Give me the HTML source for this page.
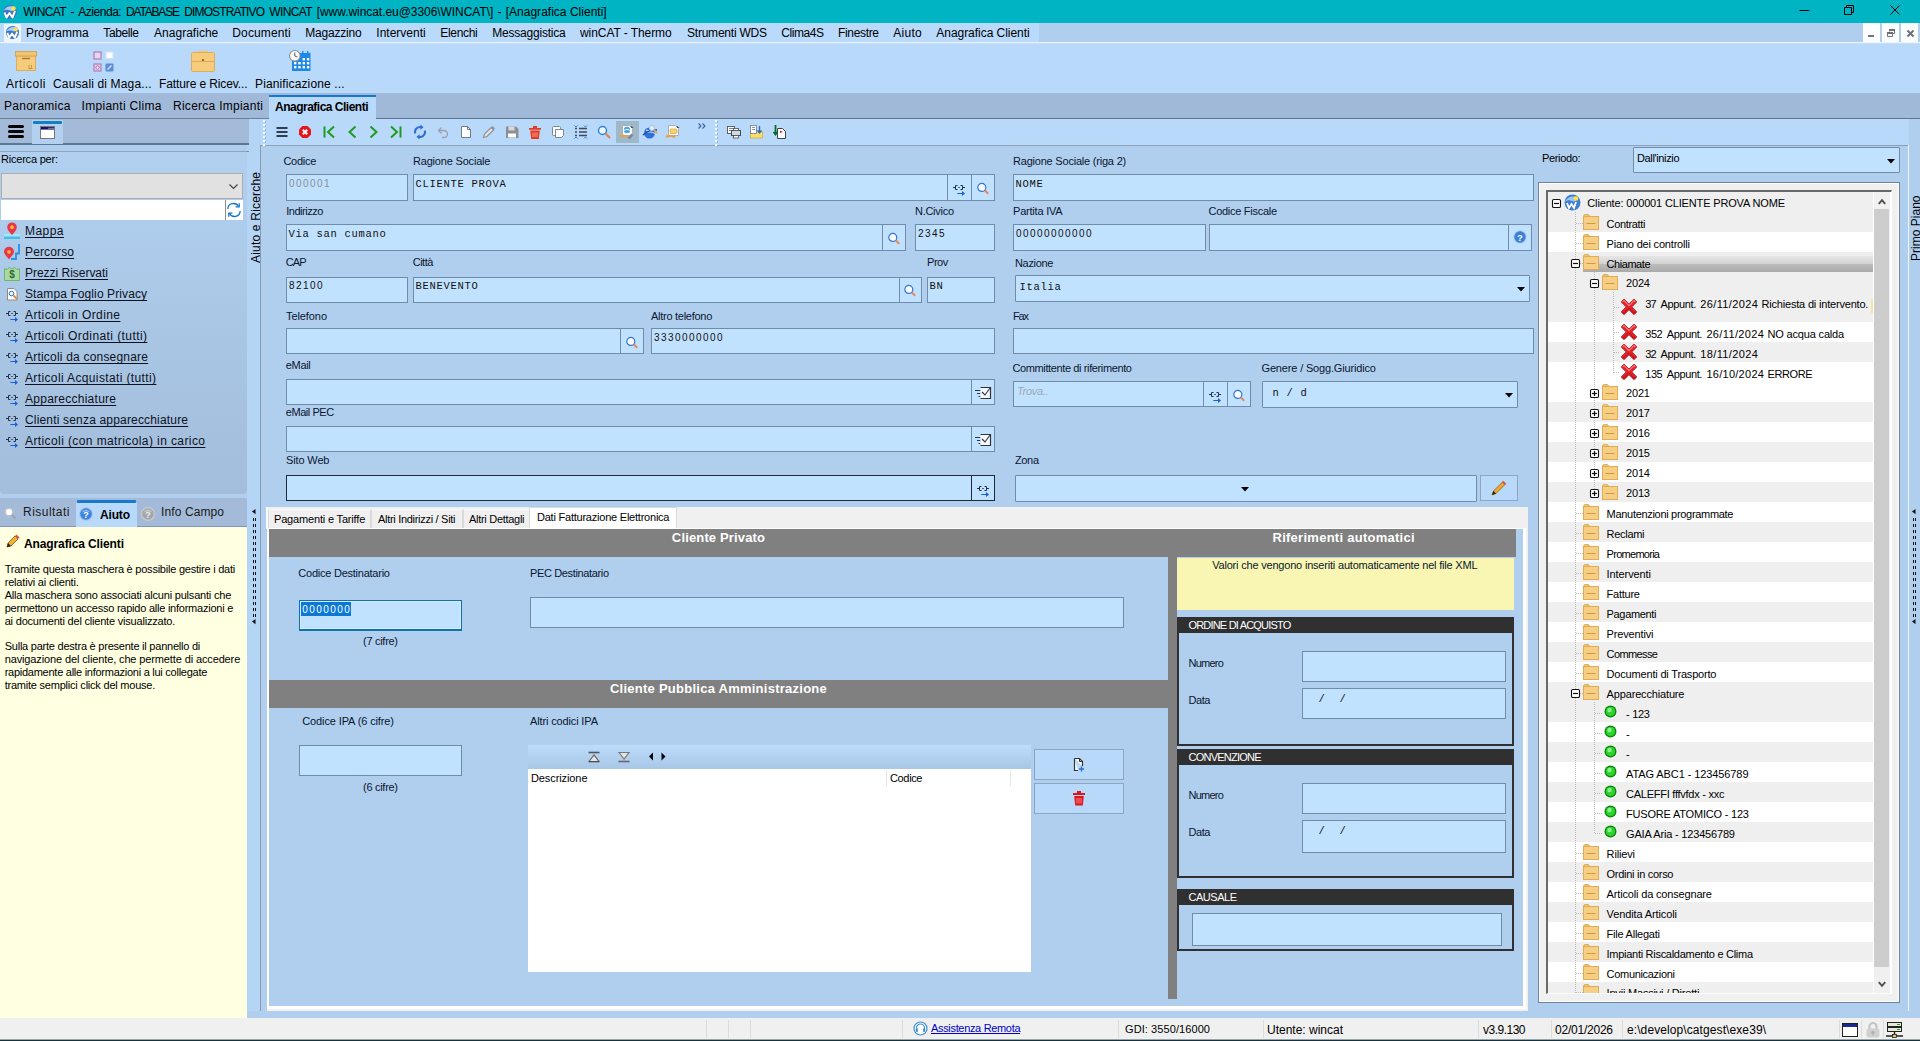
<!DOCTYPE html>
<html><head><meta charset="utf-8"><title>WINCAT</title>
<style>
html,body{margin:0;padding:0;}
body{width:1920px;height:1041px;overflow:hidden;position:relative;background:#b0cfee;font-family:"Liberation Sans",sans-serif;font-size:11px;color:#000;}
body div, body svg{position:absolute;box-sizing:border-box;}
svg{overflow:visible}
</style></head><body>
<div style="left:0px;top:0px;width:1920px;height:23px;background:#00b4c4;"></div>
<div style="left:0px;top:23px;width:1920px;height:20px;background:#b0cfee;"></div>
<div style="left:0px;top:23px;width:1039px;height:20px;background:#badafb;"></div>
<div style="left:0px;top:42px;width:1920px;height:1px;background:#eaf3fd;"></div>
<div style="left:0px;top:43px;width:1920px;height:1px;background:#c6dffb;"></div>
<div style="left:0px;top:44px;width:1920px;height:49px;background:#b9d9fb;"></div>
<div style="left:0px;top:93px;width:1920px;height:25px;background:#a0b9d9;"></div>
<div style="left:0px;top:118px;width:1920px;height:1px;background:#6f7f96;"></div>
<div style="left:249px;top:119px;width:1671px;height:27px;background:#b9d9fb;"></div>
<div style="left:264px;top:146px;width:1273px;height:361px;background:#b0cfee;"></div>
<div style="left:23.3px;top:3.84px;line-height:16px;font-size:12px;white-space:pre;letter-spacing:-0.607px;">WINCAT</div>
<div style="left:70.5px;top:3.84px;line-height:16px;font-size:12px;white-space:pre;letter-spacing:0.5px;">-</div>
<div style="left:78.3px;top:3.84px;line-height:16px;font-size:12px;white-space:pre;letter-spacing:-0.472px;">Azienda:</div>
<div style="left:126px;top:3.84px;line-height:16px;font-size:12px;white-space:pre;letter-spacing:-1.179px;">DATABASE</div>
<div style="left:184.3px;top:3.84px;line-height:16px;font-size:12px;white-space:pre;letter-spacing:-0.887px;">DIMOSTRATIVO</div>
<div style="left:269.3px;top:3.84px;line-height:16px;font-size:12px;white-space:pre;letter-spacing:-0.608px;">WINCAT</div>
<div style="left:316.7px;top:3.84px;line-height:16px;font-size:12px;white-space:pre;letter-spacing:-0.052px;">[www.wincat.eu@3306\WINCAT\]</div>
<div style="left:497.5px;top:3.84px;line-height:16px;font-size:12px;white-space:pre;letter-spacing:0.5px;">-</div>
<div style="left:505.7px;top:3.84px;line-height:16px;font-size:12px;white-space:pre;letter-spacing:0.015px;">[Anagrafica Clienti]</div>
<svg style="left:1799px;top:4px;" width="110" height="14" viewBox="0 0 110 14"><path d="M0.500 6.500h10" stroke="#000" stroke-width="1" fill="none"/><path d="M45.500 3.500h7v7h-7z M47.500 3.500v-2h7v7h-2" stroke="#000" stroke-width="1" fill="none"/><path d="M91.500 1.500l9 9m0-9l-9 9" stroke="#000" stroke-width="1" fill="none"/></svg>
<div style="left:26px;top:24.84px;line-height:16px;font-size:12px;white-space:pre;letter-spacing:0.002px;">Programma</div>
<div style="left:103.3px;top:24.84px;line-height:16px;font-size:12px;white-space:pre;letter-spacing:-0.389px;">Tabelle</div>
<div style="left:154px;top:24.84px;line-height:16px;font-size:12px;white-space:pre;letter-spacing:0.025px;">Anagrafiche</div>
<div style="left:232.3px;top:24.84px;line-height:16px;font-size:12px;white-space:pre;letter-spacing:0.13px;">Documenti</div>
<div style="left:305.3px;top:24.84px;line-height:16px;font-size:12px;white-space:pre;letter-spacing:-0.204px;">Magazzino</div>
<div style="left:376.3px;top:24.84px;line-height:16px;font-size:12px;white-space:pre;letter-spacing:0.005px;">Interventi</div>
<div style="left:440.3px;top:24.84px;line-height:16px;font-size:12px;white-space:pre;letter-spacing:-0.327px;">Elenchi</div>
<div style="left:492.3px;top:24.84px;line-height:16px;font-size:12px;white-space:pre;letter-spacing:-0.219px;">Messaggistica</div>
<div style="left:580px;top:24.84px;line-height:16px;font-size:12px;white-space:pre;letter-spacing:-0.072px;">winCAT - Thermo</div>
<div style="left:687px;top:24.84px;line-height:16px;font-size:12px;white-space:pre;letter-spacing:-0.224px;">Strumenti WDS</div>
<div style="left:781.3px;top:24.84px;line-height:16px;font-size:12px;white-space:pre;letter-spacing:-0.443px;">Clima4S</div>
<div style="left:838px;top:24.84px;line-height:16px;font-size:12px;white-space:pre;letter-spacing:-0.337px;">Finestre</div>
<div style="left:893.3px;top:24.84px;line-height:16px;font-size:12px;white-space:pre;letter-spacing:0.26px;">Aiuto</div>
<div style="left:936.3px;top:24.84px;line-height:16px;font-size:12px;white-space:pre;letter-spacing:-0.039px;">Anagrafica Clienti</div>
<div style="left:1863px;top:23px;width:17px;height:19px;background:#fcfdff;"></div>
<div style="left:1882px;top:23px;width:17px;height:19px;background:#fcfdff;"></div>
<div style="left:1901px;top:23px;width:17px;height:19px;background:#fcfdff;"></div>
<svg style="left:1863px;top:23px;" width="56" height="19" viewBox="0 0 56 19"><path d="M5 13h6" stroke="#6d717b" stroke-width="2" fill="none"/><path d="M24.500 10.500h5v3h-5z" stroke="#6d717b" stroke-width="1" fill="none"/><path d="M24 10h6" stroke="#6d717b" stroke-width="2"/><path d="M26.500 8.500v-1h5v3h-1.500" stroke="#6d717b" stroke-width="1" fill="none"/><path d="M26 7h6" stroke="#6d717b" stroke-width="2"/><path d="M44.500 7.500l6 6m0-6l-6 6" stroke="#6d717b" stroke-width="2" fill="none"/></svg>
<div style="left:6px;top:75.84px;line-height:16px;font-size:12px;white-space:pre;letter-spacing:0.498px;">Articoli</div>
<div style="left:53px;top:75.84px;line-height:16px;font-size:12px;white-space:pre;letter-spacing:0.144px;">Causali di Maga...</div>
<div style="left:159px;top:75.84px;line-height:16px;font-size:12px;white-space:pre;letter-spacing:-0.117px;">Fatture e Ricev...</div>
<div style="left:255px;top:75.84px;line-height:16px;font-size:12px;white-space:pre;letter-spacing:0.124px;">Pianificazione ...</div>
<div style="left:4px;top:97.84px;line-height:16px;font-size:12px;white-space:pre;letter-spacing:0.274px;">Panoramica</div>
<div style="left:81.5px;top:97.84px;line-height:16px;font-size:12px;white-space:pre;letter-spacing:0.305px;">Impianti Clima</div>
<div style="left:173px;top:97.84px;line-height:16px;font-size:12px;white-space:pre;letter-spacing:0.265px;">Ricerca Impianti</div>
<div style="left:269px;top:95px;width:107px;height:24px;background:#b9d9fb;border-top:2px solid #1979ca;"></div>
<div style="left:275px;top:98.84px;line-height:16px;font-size:12px;white-space:pre;letter-spacing:-0.502px;font-weight:700;">Anagrafica Clienti</div>
<div style="left:0px;top:1018px;width:1920px;height:21px;background:#f0f0f0;"></div>
<div style="left:0px;top:1039px;width:1920px;height:1px;background:#9aa5aa;"></div>
<div style="left:0px;top:1040px;width:1920px;height:1px;background:#17323f;"></div>
<div style="left:247px;top:119px;width:14px;height:899px;background:#b5d5f6;"></div>
<div style="left:0px;top:119px;width:249px;height:25px;background:#a3bbd9;"></div>
<div style="left:0px;top:143px;width:249px;height:2px;background:#5d7797;"></div>
<div style="left:32px;top:120px;width:31px;height:24px;background:#b3d0f0;"></div>
<div style="left:33px;top:121px;width:29px;height:3px;background:#1580c0;border-radius:1px;"></div>
<div style="left:0px;top:151px;width:249px;height:1px;background:#6f8aac;"></div>
<div style="left:0px;top:145px;width:247px;height:354px;background:#b0cfee;"></div>
<svg style="left:8px;top:125px;" width="16" height="14" viewBox="0 0 16 14"><path d="M1.500 1.500h13M1.500 6.500h13M1.500 11.500h13" stroke="#000" stroke-width="3" stroke-linecap="round" fill="none"/></svg>
<svg style="left:40px;top:126px;" width="15" height="13" viewBox="0 0 15 13"><rect x="0.500" y="0.500" width="14" height="12" fill="#fff" stroke="#777"/><rect x="1" y="1" width="13" height="2.600" fill="#14146e"/><path d="M8.500 2.300h1M10.500 2.300h1M12.500 2.300h1" stroke="#eee" stroke-width="1"/></svg>
<div style="left:0px;top:151px;width:247px;height:343px;background:linear-gradient(#b1d0ef,#a3bddc);border-radius:0 0 4px 4px;border-top:1px solid #8fa3bf;"></div>
<div style="left:1px;top:152.19px;line-height:14px;font-size:11px;white-space:pre;letter-spacing:-0.209px;">Ricerca per:</div>
<div style="left:1px;top:173px;width:242px;height:26px;background:#e1e1e1;border:1px solid #adadad;"></div>
<svg style="left:229px;top:184px;" width="9" height="6" viewBox="0 0 9 6"><path d="M0.5 0.5l4 4 4-4" stroke="#444" stroke-width="1.2" fill="none"/></svg>
<div style="left:1px;top:200px;width:224px;height:20px;background:#fff;"></div>
<div style="left:225px;top:200px;width:18px;height:20px;background:#fff;border-left:1px solid #8c8c8c;"></div>
<svg style="left:225.5px;top:202px;" width="16" height="16" viewBox="0 0 16 16"><path d="M1.800 7a5.700 5.700 0 0 1 10.700-2.500M14.200 9a5.700 5.700 0 0 1-10.700 2.500" stroke="#1373c4" stroke-width="1.300" fill="none"/><path d="M13.200 1.200v3.600H9.600M2.800 14.800v-3.600h3.600" stroke="#1373c4" stroke-width="1.300" fill="none"/></svg>
<div style="left:25px;top:222.84px;line-height:16px;font-size:12px;white-space:pre;letter-spacing:0.449px;color:#0c1222;text-decoration:underline;text-underline-offset:1.5px;text-decoration-skip-ink:none;">Mappa</div>
<div style="left:25px;top:243.84px;line-height:16px;font-size:12px;white-space:pre;letter-spacing:0.138px;color:#0c1222;text-decoration:underline;text-underline-offset:1.5px;text-decoration-skip-ink:none;">Percorso</div>
<div style="left:25px;top:264.84px;line-height:16px;font-size:12px;white-space:pre;letter-spacing:-0.024px;color:#0c1222;text-decoration:underline;text-underline-offset:1.5px;text-decoration-skip-ink:none;">Prezzi Riservati</div>
<div style="left:25px;top:285.84px;line-height:16px;font-size:12px;white-space:pre;letter-spacing:0.098px;color:#0c1222;text-decoration:underline;text-underline-offset:1.5px;text-decoration-skip-ink:none;">Stampa Foglio Privacy</div>
<div style="left:25px;top:306.84px;line-height:16px;font-size:12px;white-space:pre;letter-spacing:0.41px;color:#0c1222;text-decoration:underline;text-underline-offset:1.5px;text-decoration-skip-ink:none;">Articoli in Ordine</div>
<div style="left:25px;top:327.84px;line-height:16px;font-size:12px;white-space:pre;letter-spacing:0.415px;color:#0c1222;text-decoration:underline;text-underline-offset:1.5px;text-decoration-skip-ink:none;">Articoli Ordinati (tutti)</div>
<div style="left:25px;top:348.84px;line-height:16px;font-size:12px;white-space:pre;letter-spacing:0.203px;color:#0c1222;text-decoration:underline;text-underline-offset:1.5px;text-decoration-skip-ink:none;">Articoli da consegnare</div>
<div style="left:25px;top:369.84px;line-height:16px;font-size:12px;white-space:pre;letter-spacing:0.37px;color:#0c1222;text-decoration:underline;text-underline-offset:1.5px;text-decoration-skip-ink:none;">Articoli Acquistati (tutti)</div>
<div style="left:25px;top:390.84px;line-height:16px;font-size:12px;white-space:pre;letter-spacing:0.258px;color:#0c1222;text-decoration:underline;text-underline-offset:1.5px;text-decoration-skip-ink:none;">Apparecchiature</div>
<div style="left:25px;top:411.84px;line-height:16px;font-size:12px;white-space:pre;letter-spacing:0.175px;color:#0c1222;text-decoration:underline;text-underline-offset:1.5px;text-decoration-skip-ink:none;">Clienti senza apparecchiature</div>
<div style="left:25px;top:432.84px;line-height:16px;font-size:12px;white-space:pre;letter-spacing:0.402px;color:#0c1222;text-decoration:underline;text-underline-offset:1.5px;text-decoration-skip-ink:none;">Articoli (con matricola) in carico</div>
<svg style="left:4px;top:305px;" width="16" height="16" viewBox="0 0 16 16"><path d="M2 8.500h2.500M11.500 8.500H14M6.500 6.500h-2v4h2M9.500 6.500h2v4h-2M7.300 8.500h1.400" stroke="#1f3350" stroke-width="1" fill="none"/><path d="M6.300 14.500h5.500" stroke="#1a5fe0" stroke-width="1"/><path d="M11 12L14 14.500 11 17z" fill="#1a5fe0"/></svg>
<svg style="left:4px;top:326px;" width="16" height="16" viewBox="0 0 16 16"><path d="M2 8.500h2.500M11.500 8.500H14M6.500 6.500h-2v4h2M9.500 6.500h2v4h-2M7.300 8.500h1.400" stroke="#1f3350" stroke-width="1" fill="none"/><path d="M6.300 14.500h5.500" stroke="#1a5fe0" stroke-width="1"/><path d="M11 12L14 14.500 11 17z" fill="#1a5fe0"/></svg>
<svg style="left:4px;top:347px;" width="16" height="16" viewBox="0 0 16 16"><path d="M2 8.500h2.500M11.500 8.500H14M6.500 6.500h-2v4h2M9.500 6.500h2v4h-2M7.300 8.500h1.400" stroke="#1f3350" stroke-width="1" fill="none"/><path d="M6.300 14.500h5.500" stroke="#1a5fe0" stroke-width="1"/><path d="M11 12L14 14.500 11 17z" fill="#1a5fe0"/></svg>
<svg style="left:4px;top:368px;" width="16" height="16" viewBox="0 0 16 16"><path d="M2 8.500h2.500M11.500 8.500H14M6.500 6.500h-2v4h2M9.500 6.500h2v4h-2M7.300 8.500h1.400" stroke="#1f3350" stroke-width="1" fill="none"/><path d="M6.300 14.500h5.500" stroke="#1a5fe0" stroke-width="1"/><path d="M11 12L14 14.500 11 17z" fill="#1a5fe0"/></svg>
<svg style="left:4px;top:389px;" width="16" height="16" viewBox="0 0 16 16"><path d="M2 8.500h2.500M11.500 8.500H14M6.500 6.500h-2v4h2M9.500 6.500h2v4h-2M7.300 8.500h1.400" stroke="#1f3350" stroke-width="1" fill="none"/><path d="M6.300 14.500h5.500" stroke="#1a5fe0" stroke-width="1"/><path d="M11 12L14 14.500 11 17z" fill="#1a5fe0"/></svg>
<svg style="left:4px;top:410px;" width="16" height="16" viewBox="0 0 16 16"><path d="M2 8.500h2.500M11.500 8.500H14M6.500 6.500h-2v4h2M9.500 6.500h2v4h-2M7.300 8.500h1.400" stroke="#1f3350" stroke-width="1" fill="none"/><path d="M6.300 14.500h5.500" stroke="#1a5fe0" stroke-width="1"/><path d="M11 12L14 14.500 11 17z" fill="#1a5fe0"/></svg>
<svg style="left:4px;top:431px;" width="16" height="16" viewBox="0 0 16 16"><path d="M2 8.500h2.500M11.500 8.500H14M6.500 6.500h-2v4h2M9.500 6.500h2v4h-2M7.300 8.500h1.400" stroke="#1f3350" stroke-width="1" fill="none"/><path d="M6.300 14.500h5.500" stroke="#1a5fe0" stroke-width="1"/><path d="M11 12L14 14.500 11 17z" fill="#1a5fe0"/></svg>
<svg style="left:4px;top:222px;" width="16" height="17" viewBox="0 0 16 17"><path d="M0 12h16v3H0z" fill="#a5e4f5"/><path d="M0 14.500h16V17H0z" fill="#45bde8"/><path d="M8 13C5 9.500 3.200 7.500 3.200 5.200a4.800 4.800 0 0 1 9.600 0c0 2.300-1.800 4.300-4.800 7.800z" fill="#e8364a"/><circle cx="8" cy="5.200" r="1.900" fill="#ffb833"/></svg>
<svg style="left:4px;top:244px;" width="16" height="16" viewBox="0 0 16 16"><path d="M15 0v9.500h-3v5.500H7" stroke="#2d8fe5" stroke-width="1.800" fill="none"/><path d="M5 15.500C2.500 12 0 10 0 7.800a5 5 0 0 1 10 0c0 2.200-2.500 4.200-5 7.700z" fill="#e8364a"/><circle cx="5" cy="7.800" r="1.900" fill="#ffb833"/></svg>
<svg style="left:4px;top:266px;" width="16" height="15" viewBox="0 0 16 15"><path d="M0.500 2.500l2.500 1 2.500-2 2.500 1.500 2.500-1.500 2.500 2 2.500-1v12H0.500z" fill="#a9d8a3" stroke="#6fb56f" stroke-width="1"/><text x="8" y="12" font-size="10" font-weight="700" text-anchor="middle" fill="#2f6b32" font-family="Liberation Sans">$</text></svg>
<svg style="left:7px;top:288px;" width="11" height="13" viewBox="0 0 11 13"><path d="M0.500 0.500h6.500l3 3v8.500H0.500z" fill="#fff" stroke="#8a8a8a"/><circle cx="4.500" cy="5.500" r="2.300" fill="#e8f3ff" stroke="#3a6fb5" stroke-width="1"/><path d="M6.500 7.500l3.500 3.500" stroke="#e58a3c" stroke-width="1.800"/></svg>
<div style="left:249px;top:263px;line-height:15px;height:15px;font-size:12px;white-space:pre;letter-spacing:0.197px;color:#000;transform-origin:0 0;transform:rotate(-90deg);">Aiuto e Ricerche</div>
<div style="left:261px;top:146px;width:4px;height:872px;background:#b0cfee;"></div>
<div style="left:0px;top:498px;width:247px;height:29px;background:#a3bbd9;border-bottom:1px solid #8297b3;"></div>
<div style="left:76px;top:503px;width:61px;height:24px;background:#b9d9fb;"></div>
<div style="left:77px;top:500px;width:59px;height:3px;background:#1979ca;border-radius:1px;"></div>
<div style="left:23px;top:503.84px;line-height:16px;font-size:12px;white-space:pre;letter-spacing:0.477px;color:#1a1a1a;">Risultati</div>
<div style="left:100px;top:506.84px;line-height:16px;font-size:12px;white-space:pre;letter-spacing:-0.164px;font-weight:700;">Aiuto</div>
<div style="left:161px;top:503.84px;line-height:16px;font-size:12px;white-space:pre;letter-spacing:0.106px;color:#1a1a1a;">Info Campo</div>
<svg style="left:4px;top:507px;" width="13" height="13" viewBox="0 0 13 13"><circle cx="5" cy="5" r="3.800" fill="#fff" stroke="#b9c3cf" stroke-width="1.400"/><path d="M8 8l3.500 3.500" stroke="#9aa3ad" stroke-width="2"/></svg>
<svg style="left:79px;top:506.5px;" width="14" height="14" viewBox="0 0 14 14"><circle cx="7" cy="7" r="7" fill="#a9c9f0"/><circle cx="7" cy="7" r="5.800" fill="#3b83dc"/><path d="M2.500 5.500a5 5 0 0 1 9 0c-3-1.200-6-1.200-9 0z" fill="#8fbdf0"/><text x="7" y="10.500" font-size="9.500" font-weight="700" text-anchor="middle" fill="#fff" font-family="Liberation Sans">?</text></svg>
<svg style="left:141px;top:506.5px;" width="14" height="14" viewBox="0 0 14 14"><circle cx="7" cy="7" r="7" fill="#c9ccd1"/><circle cx="7" cy="7" r="5.800" fill="#a3a6ab"/><path d="M2.500 5.500a5 5 0 0 1 9 0c-3-1.200-6-1.200-9 0z" fill="#c6c8cc"/><text x="7" y="10.500" font-size="9.500" font-weight="700" text-anchor="middle" fill="#ececec" font-family="Liberation Sans">?</text></svg>
<div style="left:0px;top:527px;width:247px;height:491px;background:#ffffe1;"></div>
<div style="left:260px;top:145px;width:1px;height:873px;background:#8a9ab0;"></div>
<div style="left:24px;top:535.84px;line-height:16px;font-size:12px;white-space:pre;letter-spacing:-0.119px;font-weight:700;">Anagrafica Clienti</div>
<svg style="left:5px;top:534px;" width="15" height="15" viewBox="0 0 15 15"><path d="M2 13l1-4 7-7 3 3-7 7z" fill="#f2b233" stroke="#7a5a10" stroke-width="0.800"/><path d="M10 2l1.500-1.500 3 3L13 5z" fill="#e0524a"/><path d="M2 13l1-4 3 3z" fill="#222"/></svg>
<div style="left:4.7px;top:562.19px;line-height:14px;font-size:11px;white-space:pre;letter-spacing:-0.227px;">Tramite questa maschera è possibile gestire i dati</div>
<div style="left:4.7px;top:575.19px;line-height:14px;font-size:11px;white-space:pre;letter-spacing:-0.186px;">relativi ai clienti.</div>
<div style="left:4.7px;top:588.19px;line-height:14px;font-size:11px;white-space:pre;letter-spacing:-0.201px;">Alla maschera sono associati alcuni pulsanti che</div>
<div style="left:4.7px;top:601.19px;line-height:14px;font-size:11px;white-space:pre;letter-spacing:-0.236px;">permettono un accesso rapido alle informazioni e</div>
<div style="left:4.7px;top:614.19px;line-height:14px;font-size:11px;white-space:pre;letter-spacing:-0.198px;">ai documenti del cliente visualizzato.</div>
<div style="left:4.7px;top:639.19px;line-height:14px;font-size:11px;white-space:pre;letter-spacing:-0.23px;">Sulla parte destra è presente il pannello di</div>
<div style="left:4.7px;top:652.19px;line-height:14px;font-size:11px;white-space:pre;letter-spacing:-0.124px;">navigazione del cliente, che permette di accedere</div>
<div style="left:4.7px;top:665.19px;line-height:14px;font-size:11px;white-space:pre;letter-spacing:-0.259px;">rapidamente alle informazioni a lui collegate</div>
<div style="left:4.7px;top:678.19px;line-height:14px;font-size:11px;white-space:pre;letter-spacing:-0.222px;">tramite semplici click del mouse.</div>
<svg style="left:252px;top:509px;" width="4" height="6" viewBox="0 0 4 6"><path d="M3.500 0v5.200L0 2.600z" fill="#111"/></svg>
<div style="left:253px;top:518px;width:1px;height:3px;background:#111;"></div>
<div style="left:255px;top:518px;width:1px;height:3px;background:#111;"></div>
<div style="left:253px;top:524px;width:1px;height:3px;background:#111;"></div>
<div style="left:255px;top:524px;width:1px;height:3px;background:#111;"></div>
<div style="left:253px;top:530px;width:1px;height:3px;background:#111;"></div>
<div style="left:255px;top:530px;width:1px;height:3px;background:#111;"></div>
<div style="left:253px;top:536px;width:1px;height:3px;background:#111;"></div>
<div style="left:255px;top:536px;width:1px;height:3px;background:#111;"></div>
<div style="left:253px;top:542px;width:1px;height:3px;background:#111;"></div>
<div style="left:255px;top:542px;width:1px;height:3px;background:#111;"></div>
<div style="left:253px;top:548px;width:1px;height:3px;background:#111;"></div>
<div style="left:255px;top:548px;width:1px;height:3px;background:#111;"></div>
<div style="left:253px;top:554px;width:1px;height:3px;background:#111;"></div>
<div style="left:255px;top:554px;width:1px;height:3px;background:#111;"></div>
<div style="left:253px;top:560px;width:1px;height:3px;background:#111;"></div>
<div style="left:255px;top:560px;width:1px;height:3px;background:#111;"></div>
<div style="left:253px;top:566px;width:1px;height:3px;background:#111;"></div>
<div style="left:255px;top:566px;width:1px;height:3px;background:#111;"></div>
<div style="left:253px;top:572px;width:1px;height:3px;background:#111;"></div>
<div style="left:255px;top:572px;width:1px;height:3px;background:#111;"></div>
<div style="left:253px;top:578px;width:1px;height:3px;background:#111;"></div>
<div style="left:255px;top:578px;width:1px;height:3px;background:#111;"></div>
<div style="left:253px;top:584px;width:1px;height:3px;background:#111;"></div>
<div style="left:255px;top:584px;width:1px;height:3px;background:#111;"></div>
<div style="left:253px;top:590px;width:1px;height:3px;background:#111;"></div>
<div style="left:255px;top:590px;width:1px;height:3px;background:#111;"></div>
<div style="left:253px;top:596px;width:1px;height:3px;background:#111;"></div>
<div style="left:255px;top:596px;width:1px;height:3px;background:#111;"></div>
<div style="left:253px;top:602px;width:1px;height:3px;background:#111;"></div>
<div style="left:255px;top:602px;width:1px;height:3px;background:#111;"></div>
<div style="left:253px;top:608px;width:1px;height:3px;background:#111;"></div>
<div style="left:255px;top:608px;width:1px;height:3px;background:#111;"></div>
<div style="left:253px;top:614px;width:1px;height:3px;background:#111;"></div>
<div style="left:255px;top:614px;width:1px;height:3px;background:#111;"></div>
<svg style="left:252px;top:619px;" width="4" height="6" viewBox="0 0 4 6"><path d="M3.500 0v5.200L0 2.600z" fill="#111"/></svg>
<div style="left:261px;top:145px;width:1647px;height:1px;background:#8fa2bb;"></div>
<div style="left:376px;top:118px;width:1544px;height:1px;background:#5f7393;"></div>
<div style="left:263px;top:120px;width:2px;height:2px;background:#f4f9ff;"></div>
<div style="left:265px;top:121px;width:1px;height:2px;background:#9ab3d2;"></div>
<div style="left:715px;top:120px;width:2px;height:2px;background:#f4f9ff;"></div>
<div style="left:717px;top:121px;width:1px;height:2px;background:#9ab3d2;"></div>
<div style="left:263px;top:124px;width:2px;height:2px;background:#f4f9ff;"></div>
<div style="left:265px;top:125px;width:1px;height:2px;background:#9ab3d2;"></div>
<div style="left:715px;top:124px;width:2px;height:2px;background:#f4f9ff;"></div>
<div style="left:717px;top:125px;width:1px;height:2px;background:#9ab3d2;"></div>
<div style="left:263px;top:128px;width:2px;height:2px;background:#f4f9ff;"></div>
<div style="left:265px;top:129px;width:1px;height:2px;background:#9ab3d2;"></div>
<div style="left:715px;top:128px;width:2px;height:2px;background:#f4f9ff;"></div>
<div style="left:717px;top:129px;width:1px;height:2px;background:#9ab3d2;"></div>
<div style="left:263px;top:132px;width:2px;height:2px;background:#f4f9ff;"></div>
<div style="left:265px;top:133px;width:1px;height:2px;background:#9ab3d2;"></div>
<div style="left:715px;top:132px;width:2px;height:2px;background:#f4f9ff;"></div>
<div style="left:717px;top:133px;width:1px;height:2px;background:#9ab3d2;"></div>
<div style="left:263px;top:136px;width:2px;height:2px;background:#f4f9ff;"></div>
<div style="left:265px;top:137px;width:1px;height:2px;background:#9ab3d2;"></div>
<div style="left:715px;top:136px;width:2px;height:2px;background:#f4f9ff;"></div>
<div style="left:717px;top:137px;width:1px;height:2px;background:#9ab3d2;"></div>
<div style="left:263px;top:140px;width:2px;height:2px;background:#f4f9ff;"></div>
<div style="left:265px;top:141px;width:1px;height:2px;background:#9ab3d2;"></div>
<div style="left:715px;top:140px;width:2px;height:2px;background:#f4f9ff;"></div>
<div style="left:717px;top:141px;width:1px;height:2px;background:#9ab3d2;"></div>
<div style="left:263px;top:144px;width:2px;height:2px;background:#f4f9ff;"></div>
<div style="left:265px;top:145px;width:1px;height:2px;background:#9ab3d2;"></div>
<div style="left:715px;top:144px;width:2px;height:2px;background:#f4f9ff;"></div>
<div style="left:717px;top:145px;width:1px;height:2px;background:#9ab3d2;"></div>
<svg style="left:273.5px;top:124.0px;" width="16" height="16" viewBox="0 0 16 16"><path d="M2.500 4h11M2.500 8h11M2.500 12h11" stroke="#2d3e50" stroke-width="1.800" fill="none"/></svg>
<svg style="left:297.0px;top:124.0px;" width="16" height="16" viewBox="0 0 16 16"><path d="M5.400 2h5.200L14 5.400v5.200L10.600 14H5.400L2 10.600V5.400z" fill="#e8141c"/><path d="M5.800 5.800l4.400 4.400m0-4.400l-4.400 4.400" stroke="#fff" stroke-width="2.100"/></svg>
<svg style="left:321.0px;top:124.0px;" width="16" height="16" viewBox="0 0 16 16"><path d="M3.500 2.500v11" stroke="#1f9a1f" stroke-width="2"/><path d="M13 2.500L7 8l6 5.500" stroke="#1f9a1f" stroke-width="2" fill="none"/></svg>
<svg style="left:344.0px;top:124.0px;" width="16" height="16" viewBox="0 0 16 16"><path d="M11.500 2.500L5.500 8l6 5.500" stroke="#1f9a1f" stroke-width="2" fill="none"/></svg>
<svg style="left:365.5px;top:124.0px;" width="16" height="16" viewBox="0 0 16 16"><path d="M4.500 2.500L10.500 8l-6 5.500" stroke="#1f9a1f" stroke-width="2" fill="none"/></svg>
<svg style="left:388.0px;top:124.0px;" width="16" height="16" viewBox="0 0 16 16"><path d="M12.500 2.500v11" stroke="#1f9a1f" stroke-width="2"/><path d="M3 2.500L9 8l-6 5.500" stroke="#1f9a1f" stroke-width="2" fill="none"/></svg>
<svg style="left:412.0px;top:124.0px;" width="16" height="16" viewBox="0 0 16 16"><path d="M3.200 9.500A5 5 0 0 1 10 3.500M12.800 6.500A5 5 0 0 1 6 12.500" stroke="#2f6fd0" stroke-width="2" fill="none"/><path d="M8.500 0.500l3 2.800-3.200 2.400zM7.500 15.500l-3-2.800 3.200-2.400z" fill="#2f6fd0"/></svg>
<svg style="left:435.0px;top:124.0px;" width="16" height="16" viewBox="0 0 16 16"><path d="M3.500 6.500h5.500a3.500 3.500 0 0 1 0 7H7" stroke="#9aa3ad" stroke-width="1.300" fill="none"/><path d="M6.500 3.500l-3 3 3 3" stroke="#9aa3ad" stroke-width="1.300" fill="none"/></svg>
<svg style="left:458.0px;top:124.0px;" width="16" height="16" viewBox="0 0 16 16"><path d="M3.500 2.500h6l3 3v8h-9z" fill="#fff" stroke="#6f7b88" stroke-width="1"/><path d="M9.500 2.500v3h3" fill="none" stroke="#6f7b88"/></svg>
<svg style="left:481.0px;top:124.0px;" width="16" height="16" viewBox="0 0 16 16"><path d="M2.500 13.500l1-3.500 6.500-6.500 2.500 2.500-6.500 6.500z" fill="#e3e3e3" stroke="#8c9299" stroke-width="1.200"/><path d="M10 3.500l1.500-1.500 2.500 2.500-1.500 1.500z" fill="#8c9299"/></svg>
<svg style="left:504.0px;top:124.0px;" width="16" height="16" viewBox="0 0 16 16"><path d="M2 2.500h10l2.500 2.500v9H2z" fill="#8c8f94"/><rect x="4.500" y="2.500" width="6" height="4" fill="#d6d8db"/><rect x="4" y="9.500" width="8" height="4" fill="#fff"/></svg>
<svg style="left:527.0px;top:124.0px;" width="16" height="16" viewBox="0 0 16 16"><path d="M2 4h12v1.800H2zM6 2h4v2H6z" fill="#e63a1e"/><path d="M3.200 6.500h9.600l-1 8.500H4.200z" fill="#e63a1e"/><path d="M6 8.500v4.500M8 8.500v4.500M10 8.500v4.500" stroke="#ffc9bd" stroke-width=".7"/></svg>
<svg style="left:550.0px;top:124.0px;" width="16" height="16" viewBox="0 0 16 16"><rect x="2.500" y="2.500" width="8" height="9" rx="1" fill="#fff" stroke="#7d8794"/><path d="M5.500 5.500h8v6l-2 2h-6z" fill="#fff" stroke="#7d8794"/></svg>
<svg style="left:573.0px;top:124.0px;" width="16" height="16" viewBox="0 0 16 16"><path d="M6 4.500h8M6 8h8M6 11.500h8" stroke="#3c4a5c" stroke-width="1.300"/><path d="M2 4.500h2M2 8h2M2 11.500h2" stroke="#3c4a5c" stroke-width="1.300"/><path d="M1.500 1.500l1.500 1.500 1.500-1.500M11 1.500l1.500 1.500L14 1.500M1.500 14.500L3 13l1.500 1.500M11 14.500l1.500-1.500 1.500 1.500" stroke="#2f7fd6" stroke-width="1" fill="none"/></svg>
<svg style="left:596.0px;top:124.0px;" width="16" height="16" viewBox="0 0 16 16"><circle cx="6.500" cy="6.500" r="4" fill="#eaf5ff" stroke="#2f86d6" stroke-width="1.500"/><path d="M9.500 9.500l4.500 4.500" stroke="#e0884a" stroke-width="2.200"/></svg>
<div style="left:616px;top:121px;width:23px;height:22px;background:#9fb8c8;"></div>
<svg style="left:619.0px;top:124.0px;" width="16" height="16" viewBox="0 0 16 16"><path d="M3.500 1.500h7l3 3v7h-10z" fill="#fff" stroke="#a8b0ba"/><circle cx="8" cy="6" r="3.200" fill="#4aa3e6"/><path d="M5 6.500c2-1.500 4-1.500 6 0" stroke="#fff" stroke-width="1" fill="none"/><path d="M1 12.500c3-1.500 5-1.500 7 .5" stroke="#e8a04a" stroke-width="2.200" fill="none"/><path d="M9.500 14.500l4-4" stroke="#7d8794" stroke-width="2.500"/><path d="M11.500 2l3 1.500-2 .5z" fill="#222"/></svg>
<svg style="left:642.0px;top:124.0px;" width="16" height="16" viewBox="0 0 16 16"><circle cx="7.500" cy="9" r="5.500" fill="#2f6fd6"/><path d="M2 9.500c3-2 8-2 11 0M4 6c2 1 5 1 7 0" stroke="#bfe0ff" stroke-width="1.200" fill="none"/><path d="M1 11c3-3 9-6 14-5" stroke="#1b3f9a" stroke-width="1.300" fill="none"/><circle cx="10" cy="4" r="2.600" fill="#dff0ff" stroke="#a9c4de"/><path d="M12 6l3 3" stroke="#e0a06a" stroke-width="1.800"/></svg>
<svg style="left:665.0px;top:124.0px;" width="16" height="16" viewBox="0 0 16 16"><path d="M3.500 1.500h7l3 3v7h-10z" fill="#fff" stroke="#a8b0ba"/><rect x="5" y="5" width="7" height="4.500" rx="1" fill="#f5d27a" stroke="#d9a93a" stroke-width=".8"/><path d="M1 13c3-1.500 6-1.500 9 .5" stroke="#e8a04a" stroke-width="2.200" fill="none"/><path d="M11.500 2l3 1.500-2 .5z" fill="#222"/></svg>
<svg style="left:698px;top:123px;" width="9" height="6" viewBox="0 0 9 6"><path d="M0.500 0.500L3 3 0.500 5.500M4.500 0.500L7 3 4.500 5.500" stroke="#3f5f9f" stroke-width="1.100" fill="none"/></svg>
<svg style="left:725.5px;top:124.0px;" width="16" height="16" viewBox="0 0 16 16"><rect x="1.500" y="2.500" width="7" height="7" fill="#fff" stroke="#59636f"/><path d="M3 4.500h4M3 6.500h4" stroke="#59636f" stroke-width=".8"/><rect x="5.500" y="6.500" width="9" height="5" fill="#d5d9de" stroke="#474f59"/><rect x="7.500" y="4.500" width="5" height="2" fill="#fff" stroke="#474f59" stroke-width=".8"/><rect x="7.500" y="11.500" width="5" height="2.500" fill="#fff" stroke="#474f59" stroke-width=".8"/></svg>
<svg style="left:748.5px;top:124.0px;" width="16" height="16" viewBox="0 0 16 16"><rect x="1.500" y="7.500" width="12" height="6.500" fill="#f7dc6f" stroke="#d4b23a" stroke-width=".8"/><rect x="1.500" y="1.500" width="6" height="8" fill="#fff" stroke="#6c7a89" stroke-width=".8"/><path d="M3 3.500h3M3 5.500h3" stroke="#6c7a89" stroke-width=".8"/><path d="M10.500 2v6.500M8.500 6.500l2 2.500 2-2.500" stroke="#2f6fb0" stroke-width="1.400" fill="none"/></svg>
<svg style="left:772.0px;top:124.0px;" width="16" height="16" viewBox="0 0 16 16"><path d="M5.500 4.500h5l3 3v7h-8z" fill="#fff" stroke="#3c4450"/><path d="M3.500 1v9M1.500 8l2 2.500 2-2.500" stroke="#0a6e2a" stroke-width="1.800" fill="none"/><path d="M8 6.500l3 1.500-3 1z" fill="#e02020"/></svg>
<div style="left:283.4px;top:154.19px;line-height:14px;font-size:11px;white-space:pre;letter-spacing:-0.27px;color:#0a1630;">Codice</div>
<div style="left:413px;top:154.19px;line-height:14px;font-size:11px;white-space:pre;letter-spacing:-0.188px;color:#0a1630;">Ragione Sociale</div>
<div style="left:286px;top:174px;width:122px;height:27px;background:#c1e2ff;border:1px solid #718bab;"></div>
<div style="left:289.09999999999997px;top:176.63px;line-height:13px;font-size:10px;white-space:pre;letter-spacing:1.44px;color:#8a8f96;">000001</div>
<div style="left:413px;top:174px;width:535px;height:27px;background:#c1e2ff;border:1px solid #718bab;"></div>
<div style="left:415.4px;top:176.80px;line-height:14px;font-size:10.5px;white-space:pre;font-family:'Liberation Mono',monospace;letter-spacing:0.7px;color:#111;">CLIENTE PROVA</div>
<div style="left:947px;top:174px;width:25px;height:27px;background:#c1e2ff;border:1px solid #718bab;"></div>
<svg style="left:951px;top:179px;" width="16" height="16" viewBox="0 0 16 16"><path d="M2 8.500h2.500M11.500 8.500H14M6.500 6.500h-2v4h2M9.500 6.500h2v4h-2M7.300 8.500h1.400" stroke="#1f3350" stroke-width="1" fill="none"/><path d="M6.300 14.500h5.500" stroke="#1a5fe0" stroke-width="1"/><path d="M11 12L14 14.500 11 17z" fill="#1a5fe0"/></svg>
<div style="left:971px;top:174px;width:24px;height:27px;background:#c1e2ff;border:1px solid #718bab;"></div>
<svg style="left:975px;top:179px;" width="16" height="16" viewBox="0 0 16 16"><circle cx="6.800" cy="8.400" r="4" fill="#fafdff" stroke="#3573d6" stroke-width="1.200"/><path d="M9.900 11.500l3.300 3.300" stroke="#e8875a" stroke-width="2"/></svg>
<div style="left:1013px;top:154.19px;line-height:14px;font-size:11px;white-space:pre;letter-spacing:-0.209px;color:#0a1630;">Ragione Sociale (riga 2)</div>
<div style="left:1013px;top:174px;width:521px;height:27px;background:#c1e2ff;border:1px solid #718bab;"></div>
<div style="left:1015.4px;top:176.80px;line-height:14px;font-size:10.5px;white-space:pre;font-family:'Liberation Mono',monospace;letter-spacing:0.7px;color:#111;">NOME</div>
<div style="left:286.2px;top:203.69px;line-height:14px;font-size:11px;white-space:pre;letter-spacing:-0.484px;color:#0a1630;">Indirizzo</div>
<div style="left:915px;top:203.69px;line-height:14px;font-size:11px;white-space:pre;letter-spacing:-0.279px;color:#0a1630;">N.Civico</div>
<div style="left:286px;top:224px;width:597px;height:27px;background:#c1e2ff;border:1px solid #718bab;"></div>
<div style="left:288.4px;top:226.80px;line-height:14px;font-size:10.5px;white-space:pre;font-family:'Liberation Mono',monospace;letter-spacing:0.7px;color:#111;">Via san cumano</div>
<div style="left:882px;top:224px;width:24px;height:27px;background:#c1e2ff;border:1px solid #718bab;"></div>
<svg style="left:886px;top:229px;" width="16" height="16" viewBox="0 0 16 16"><circle cx="6.800" cy="8.400" r="4" fill="#fafdff" stroke="#3573d6" stroke-width="1.200"/><path d="M9.900 11.500l3.300 3.300" stroke="#e8875a" stroke-width="2"/></svg>
<div style="left:915px;top:224px;width:80px;height:27px;background:#c1e2ff;border:1px solid #718bab;"></div>
<div style="left:918.1px;top:226.63px;line-height:13px;font-size:10px;white-space:pre;letter-spacing:1.44px;color:#111;">2345</div>
<div style="left:1013px;top:203.69px;line-height:14px;font-size:11px;white-space:pre;letter-spacing:-0.207px;color:#0a1630;">Partita IVA</div>
<div style="left:1208.5px;top:203.69px;line-height:14px;font-size:11px;white-space:pre;letter-spacing:-0.28px;color:#0a1630;">Codice Fiscale</div>
<div style="left:1013px;top:224px;width:193px;height:27px;background:#c1e2ff;border:1px solid #718bab;"></div>
<div style="left:1016.1px;top:226.63px;line-height:13px;font-size:10px;white-space:pre;letter-spacing:1.44px;color:#111;">00000000000</div>
<div style="left:1209px;top:224px;width:300px;height:27px;background:#c1e2ff;border:1px solid #718bab;"></div>
<div style="left:1508px;top:224px;width:24px;height:27px;background:#c1e2ff;border:1px solid #718bab;"></div>
<svg style="left:1512px;top:229px;" width="16" height="16" viewBox="0 0 16 16"><circle cx="8" cy="8" r="6.500" fill="#4a8ee0" stroke="#c5d9f2" stroke-width="1.200"/><circle cx="8" cy="8" r="5" fill="#3b7fd6"/><text x="8" y="11.500" font-size="9.500" font-weight="700" text-anchor="middle" fill="#fff" font-family="Liberation Sans">?</text></svg>
<div style="left:285.8px;top:255.39px;line-height:14px;font-size:11px;white-space:pre;letter-spacing:-0.963px;color:#0a1630;">CAP</div>
<div style="left:412.7px;top:255.39px;line-height:14px;font-size:11px;white-space:pre;letter-spacing:-0.481px;color:#0a1630;">Città</div>
<div style="left:927px;top:255.39px;line-height:14px;font-size:11px;white-space:pre;letter-spacing:-0.442px;color:#0a1630;">Prov</div>
<div style="left:286px;top:276.5px;width:122px;height:26px;background:#c1e2ff;border:1px solid #718bab;"></div>
<div style="left:289.09999999999997px;top:279.14px;line-height:13px;font-size:10px;white-space:pre;letter-spacing:1.44px;color:#111;">82100</div>
<div style="left:413px;top:276.5px;width:487px;height:26px;background:#c1e2ff;border:1px solid #718bab;"></div>
<div style="left:415.4px;top:279.30px;line-height:14px;font-size:10.5px;white-space:pre;font-family:'Liberation Mono',monospace;letter-spacing:0.7px;color:#111;">BENEVENTO</div>
<div style="left:899px;top:276.5px;width:23px;height:26px;background:#c1e2ff;border:1px solid #718bab;"></div>
<svg style="left:902px;top:281px;" width="16" height="16" viewBox="0 0 16 16"><circle cx="6.800" cy="8.400" r="4" fill="#fafdff" stroke="#3573d6" stroke-width="1.200"/><path d="M9.900 11.500l3.300 3.300" stroke="#e8875a" stroke-width="2"/></svg>
<div style="left:927px;top:276.5px;width:68px;height:26px;background:#c1e2ff;border:1px solid #718bab;"></div>
<div style="left:929.4px;top:279.30px;line-height:14px;font-size:10.5px;white-space:pre;font-family:'Liberation Mono',monospace;letter-spacing:0.7px;color:#111;">BN</div>
<div style="left:1015px;top:255.99px;line-height:14px;font-size:11px;white-space:pre;letter-spacing:-0.327px;color:#0a1630;">Nazione</div>
<div style="left:1015px;top:275px;width:515px;height:27px;background:#c1e2ff;border:1px solid #718bab;border-radius:1px;"></div>
<div style="left:1019.5px;top:280.00px;line-height:14px;font-size:10.5px;white-space:pre;font-family:'Liberation Mono',monospace;letter-spacing:0.7px;color:#111;">Italia</div>
<svg style="left:1517px;top:287px;" width="9" height="5" viewBox="0 0 9 5"><path d="M0 0h8L4 4.500z" fill="#000"/></svg>
<div style="left:286px;top:308.69px;line-height:14px;font-size:11px;white-space:pre;letter-spacing:-0.085px;color:#0a1630;">Telefono</div>
<div style="left:651px;top:308.69px;line-height:14px;font-size:11px;white-space:pre;letter-spacing:-0.271px;color:#0a1630;">Altro telefono</div>
<div style="left:1013px;top:308.69px;line-height:14px;font-size:11px;white-space:pre;letter-spacing:-1.172px;color:#0a1630;">Fax</div>
<div style="left:286px;top:328px;width:335px;height:26px;background:#c1e2ff;border:1px solid #718bab;"></div>
<div style="left:620px;top:328px;width:24px;height:26px;background:#c1e2ff;border:1px solid #718bab;"></div>
<svg style="left:624px;top:333px;" width="16" height="16" viewBox="0 0 16 16"><circle cx="6.800" cy="8.400" r="4" fill="#fafdff" stroke="#3573d6" stroke-width="1.200"/><path d="M9.900 11.500l3.300 3.300" stroke="#e8875a" stroke-width="2"/></svg>
<div style="left:651px;top:328px;width:344px;height:26px;background:#c1e2ff;border:1px solid #718bab;"></div>
<div style="left:654.1px;top:330.64px;line-height:13px;font-size:10px;white-space:pre;letter-spacing:1.44px;color:#111;">3330000000</div>
<div style="left:1013px;top:328px;width:521px;height:26px;background:#c1e2ff;border:1px solid #718bab;"></div>
<div style="left:285.8px;top:358.39px;line-height:14px;font-size:11px;white-space:pre;letter-spacing:-0.324px;color:#0a1630;">eMail</div>
<div style="left:286px;top:379px;width:686px;height:26px;background:#c1e2ff;border:1px solid #718bab;"></div>
<div style="left:971px;top:379px;width:24px;height:26px;background:#c1e2ff;border:1px solid #718bab;"></div>
<svg style="left:975px;top:383px;" width="16" height="16" viewBox="0 0 16 16"><path d="M0 7.500h5.500M2 10.500h3.500M3.500 13.500h2" stroke="#2b3a4d" stroke-width="1"/><path d="M5.500 4.500h10v11h-10" fill="#f4faff" stroke="#333" stroke-width="1.200"/><path d="M7 9l3 3 5-7" stroke="#333" stroke-width="1.100" fill="none"/></svg>
<div style="left:1012.5px;top:361.49px;line-height:14px;font-size:11px;white-space:pre;letter-spacing:-0.38px;color:#0a1630;">Committente di riferimento</div>
<div style="left:1261.5px;top:361.49px;line-height:14px;font-size:11px;white-space:pre;letter-spacing:-0.16px;color:#0a1630;">Genere / Sogg.Giuridico</div>
<div style="left:1013px;top:381px;width:191px;height:26px;background:#c1e2ff;border:1px solid #718bab;"></div>
<div style="left:1017px;top:384.19px;line-height:14px;font-size:11px;white-space:pre;letter-spacing:-0.32px;color:#9aa9bb;font-style:italic;">Trova..</div>
<div style="left:1203px;top:381px;width:25px;height:26px;background:#c1e2ff;border:1px solid #718bab;"></div>
<svg style="left:1207px;top:386px;" width="16" height="16" viewBox="0 0 16 16"><path d="M2 8.500h2.500M11.500 8.500H14M6.500 6.500h-2v4h2M9.500 6.500h2v4h-2M7.300 8.500h1.400" stroke="#1f3350" stroke-width="1" fill="none"/><path d="M6.300 14.500h5.500" stroke="#1a5fe0" stroke-width="1"/><path d="M11 12L14 14.500 11 17z" fill="#1a5fe0"/></svg>
<div style="left:1227px;top:381px;width:24px;height:26px;background:#c1e2ff;border:1px solid #718bab;"></div>
<svg style="left:1231px;top:386px;" width="16" height="16" viewBox="0 0 16 16"><circle cx="6.800" cy="8.400" r="4" fill="#fafdff" stroke="#3573d6" stroke-width="1.200"/><path d="M9.900 11.500l3.300 3.300" stroke="#e8875a" stroke-width="2"/></svg>
<div style="left:1262px;top:381px;width:256px;height:27px;background:#c1e2ff;border:1px solid #718bab;border-radius:1px;"></div>
<div style="left:1272.6px;top:386.40px;line-height:14px;font-size:10.5px;white-space:pre;font-family:'Liberation Mono',monospace;letter-spacing:0.7px;color:#111;">n / d</div>
<svg style="left:1505px;top:393px;" width="9" height="5" viewBox="0 0 9 5"><path d="M0 0h8L4 4.500z" fill="#000"/></svg>
<div style="left:285.8px;top:404.69px;line-height:14px;font-size:11px;white-space:pre;letter-spacing:-0.446px;color:#0a1630;">eMail PEC</div>
<div style="left:286px;top:426px;width:686px;height:26px;background:#c1e2ff;border:1px solid #718bab;"></div>
<div style="left:971px;top:426px;width:24px;height:26px;background:#c1e2ff;border:1px solid #718bab;"></div>
<svg style="left:975px;top:430px;" width="16" height="16" viewBox="0 0 16 16"><path d="M0 7.500h5.500M2 10.500h3.500M3.500 13.500h2" stroke="#2b3a4d" stroke-width="1"/><path d="M5.500 4.500h10v11h-10" fill="#f4faff" stroke="#333" stroke-width="1.200"/><path d="M7 9l3 3 5-7" stroke="#333" stroke-width="1.100" fill="none"/></svg>
<div style="left:286px;top:453.39px;line-height:14px;font-size:11px;white-space:pre;letter-spacing:-0.134px;color:#0a1630;">Sito Web</div>
<div style="left:286px;top:475px;width:686px;height:26px;background:#c1e2ff;border:1px solid #1e2a3a;"></div>
<div style="left:971px;top:475px;width:24px;height:26px;background:#c1e2ff;border:1px solid #1e2a3a;"></div>
<svg style="left:975px;top:480px;" width="16" height="16" viewBox="0 0 16 16"><path d="M2 8.500h2.500M11.500 8.500H14M6.500 6.500h-2v4h2M9.500 6.500h2v4h-2M7.300 8.500h1.400" stroke="#1f3350" stroke-width="1" fill="none"/><path d="M6.300 14.500h5.500" stroke="#1a5fe0" stroke-width="1"/><path d="M11 12L14 14.500 11 17z" fill="#1a5fe0"/></svg>
<div style="left:1015px;top:453.49px;line-height:14px;font-size:11px;white-space:pre;letter-spacing:-0.359px;color:#0a1630;">Zona</div>
<div style="left:1015px;top:475px;width:462px;height:27px;background:#c1e2ff;border:1px solid #718bab;border-radius:1px;"></div>
<svg style="left:1241px;top:487px;" width="9" height="5" viewBox="0 0 9 5"><path d="M0 0h8L4 4.500z" fill="#000"/></svg>
<div style="left:1480px;top:475px;width:38px;height:26px;background:#b9d9fb;border:1px solid #8ea6c4;"></div>
<svg style="left:1490px;top:479px;" width="18" height="18" viewBox="0 0 18 18"><path d="M2 16l1.500-4L13 2.500l2.500 2.500L6 14.500z" fill="#f0a830" stroke="#8a5a10" stroke-width=".8"/><path d="M12 3.500l1.500-1.500 2.500 2.500-1.500 1.500z" fill="#e0524a"/><path d="M2 16l1.500-4 2.500 2.500z" fill="#222"/></svg>
<div style="left:266px;top:507px;width:1262px;height:22px;background:#f0f0f0;"></div>
<div style="left:266px;top:507px;width:2px;height:22px;background:#fafafa;"></div>
<div style="left:268px;top:509px;width:103px;height:19px;background:#f0f0f0;border:1px solid #dadada;border-top-color:#f9f9f9;border-bottom:none;"></div>
<div style="left:274px;top:512.19px;line-height:14px;font-size:11px;white-space:pre;letter-spacing:-0.172px;">Pagamenti e Tariffe</div>
<div style="left:371px;top:509px;width:92px;height:19px;background:#f0f0f0;border:1px solid #dadada;border-top-color:#f9f9f9;border-bottom:none;"></div>
<div style="left:378px;top:512.19px;line-height:14px;font-size:11px;white-space:pre;letter-spacing:-0.298px;">Altri Indirizzi / Siti</div>
<div style="left:463px;top:509px;width:67px;height:19px;background:#f0f0f0;border:1px solid #dadada;border-top-color:#f9f9f9;border-bottom:none;"></div>
<div style="left:469px;top:512.19px;line-height:14px;font-size:11px;white-space:pre;letter-spacing:-0.292px;">Altri Dettagli</div>
<div style="left:529px;top:507px;width:148px;height:22px;background:#fff;border:1px solid #d9d9d9;border-bottom:none;"></div>
<div style="left:537px;top:509.89px;line-height:14px;font-size:11px;white-space:pre;letter-spacing:-0.225px;">Dati Fatturazione Elettronica</div>
<div style="left:267px;top:528px;width:1261px;height:483px;background:#f1f1f1;"></div>
<div style="left:267px;top:528px;width:1259px;height:481px;background:#fff;"></div>
<div style="left:269px;top:529px;width:1254px;height:477px;background:#b0cfee;"></div>
<div style="left:269px;top:529px;width:1247px;height:28px;background:#808080;"></div>
<div style="left:269px;top:680px;width:899px;height:28px;background:#808080;"></div>
<div style="left:1168px;top:557px;width:9px;height:442px;background:#808080;"></div>
<div style="left:269px;top:529.30px;line-height:17px;font-size:13px;white-space:pre;letter-spacing:0.15px;color:#fff;font-weight:700;width:899px;text-align:center;">Cliente Privato</div>
<div style="left:1272.5px;top:529.30px;line-height:17px;font-size:13px;white-space:pre;letter-spacing:0.265px;color:#fff;font-weight:700;">Riferimenti automatici</div>
<div style="left:269px;top:680.30px;line-height:17px;font-size:13px;white-space:pre;letter-spacing:0.25px;color:#fff;font-weight:700;width:899px;text-align:center;">Cliente Pubblica Amministrazione</div>
<div style="left:298.3px;top:566.19px;line-height:14px;font-size:11px;white-space:pre;letter-spacing:-0.239px;color:#0a1630;">Codice Destinatario</div>
<div style="left:530px;top:566.19px;line-height:14px;font-size:11px;white-space:pre;letter-spacing:-0.358px;color:#0a1630;">PEC Destinatario</div>
<div style="left:299px;top:600px;width:163px;height:31px;background:#c1e2ff;border:1px solid #1272a8;border-bottom-width:2px;box-shadow:inset 0 0 0 1px #d4ebff;"></div>
<div style="left:301px;top:602px;width:50px;height:14px;background:#0a78d7;"></div>
<div style="left:302.2px;top:603.03px;line-height:13px;font-size:10px;white-space:pre;letter-spacing:1.44px;color:#fff;">0000000</div>
<div style="left:363px;top:633.69px;line-height:14px;font-size:11px;white-space:pre;letter-spacing:-0.285px;color:#0a1630;">(7 cifre)</div>
<div style="left:530px;top:597px;width:594px;height:31px;background:#c1e2ff;border:1px solid #718bab;"></div>
<div style="left:302.3px;top:714.19px;line-height:14px;font-size:11px;white-space:pre;letter-spacing:-0.119px;color:#0a1630;">Codice IPA (6 cifre)</div>
<div style="left:530px;top:714.19px;line-height:14px;font-size:11px;white-space:pre;letter-spacing:-0.14px;color:#0a1630;">Altri codici IPA</div>
<div style="left:299px;top:745px;width:163px;height:31px;background:#c1e2ff;border:1px solid #718bab;"></div>
<div style="left:363px;top:779.69px;line-height:14px;font-size:11px;white-space:pre;letter-spacing:-0.285px;color:#0a1630;">(6 cifre)</div>
<div style="left:528px;top:745px;width:503px;height:24px;background:linear-gradient(#bcdcfc,#a8c6e6);"></div>
<div style="left:528px;top:769px;width:503px;height:203px;background:#fff;"></div>
<div style="left:886px;top:770px;width:1px;height:16px;background:#e5e5e5;"></div>
<div style="left:1010px;top:770px;width:1px;height:16px;background:#e5e5e5;"></div>
<div style="left:531px;top:771.19px;line-height:14px;font-size:11px;white-space:pre;letter-spacing:-0.097px;">Descrizione</div>
<div style="left:890px;top:771.19px;line-height:14px;font-size:11px;white-space:pre;letter-spacing:-0.35px;">Codice</div>
<svg style="left:587px;top:751px;" width="14" height="12" viewBox="0 0 14 12"><path d="M1.500 1.500h11" stroke="#555" stroke-width="1.600"/><path d="M2 10.500l5-6.500 5 6.500z" fill="#e6e6e6" stroke="#666" stroke-width="1.200"/><path d="M2 10.800h10" stroke="#444" stroke-width="1"/></svg>
<svg style="left:617px;top:751px;" width="14" height="12" viewBox="0 0 14 12"><path d="M1.500 10.500h11" stroke="#666" stroke-width="1.600"/><path d="M2 1.500l5 6.500 5-6.500z" fill="#e6e6e6" stroke="#777" stroke-width="1.200"/></svg>
<svg style="left:648px;top:752px;" width="20" height="9" viewBox="0 0 20 9"><path d="M5 0.500v8L1 4.500zM13.500 0.500v8l4-4z" fill="#000"/></svg>
<div style="left:1034px;top:749px;width:90px;height:31px;background:#b9d9fb;border:1px solid #8ea6c4;"></div>
<div style="left:1034px;top:783px;width:90px;height:31px;background:#b9d9fb;border:1px solid #8ea6c4;"></div>
<svg style="left:1072px;top:757px;" width="14" height="16" viewBox="0 0 14 16"><path d="M2.500 1.500h5l3 3v4.500M6 13.500H2.500v-12" fill="#fff" stroke="#333" stroke-width="1.200"/><path d="M7.500 1.500v3h3" fill="none" stroke="#333" stroke-width="1"/><path d="M9.500 9.500v5M7 12h5" stroke="#2f6fd0" stroke-width="1.400"/></svg>
<svg style="left:1072px;top:790px;" width="14" height="16" viewBox="0 0 14 16"><path d="M1 3h12v2H1zM5 1h4v2H5z" fill="#e0141c"/><path d="M2.200 6h9.600l-1 9.500H3.200z" fill="#e0141c"/><path d="M5 8v5.500M7 8v5.500M9 8v5.500" stroke="#ffd0d0" stroke-width=".6"/></svg>
<div style="left:1177px;top:558px;width:337px;height:52px;background:#f8f6b2;"></div>
<div style="left:1212.2px;top:558.19px;line-height:14px;font-size:11px;white-space:pre;letter-spacing:-0.196px;color:#0a1630;">Valori che vengono inseriti automaticamente nel file XML</div>
<div style="left:1177px;top:617px;width:337px;height:129px;border:2px solid #303030;"></div>
<div style="left:1177px;top:617px;width:337px;height:16px;background:#303030;"></div>
<div style="left:1188.5px;top:618.19px;line-height:14px;font-size:11px;white-space:pre;letter-spacing:-0.815px;color:#fff;">ORDINE DI ACQUISTO</div>
<div style="left:1177px;top:749px;width:337px;height:129px;border:2px solid #303030;"></div>
<div style="left:1177px;top:749px;width:337px;height:16px;background:#303030;"></div>
<div style="left:1188.5px;top:750.19px;line-height:14px;font-size:11px;white-space:pre;letter-spacing:-0.769px;color:#fff;">CONVENZIONE</div>
<div style="left:1177px;top:889px;width:337px;height:62px;border:2px solid #303030;"></div>
<div style="left:1177px;top:889px;width:337px;height:16px;background:#303030;"></div>
<div style="left:1188.5px;top:890.19px;line-height:14px;font-size:11px;white-space:pre;letter-spacing:-0.477px;color:#fff;">CAUSALE</div>
<div style="left:1188.5px;top:656.39px;line-height:14px;font-size:11px;white-space:pre;letter-spacing:-0.765px;color:#0a1630;">Numero</div>
<div style="left:1302px;top:651px;width:204px;height:31px;background:#c1e2ff;border:1px solid #718bab;"></div>
<div style="left:1188.5px;top:788.39px;line-height:14px;font-size:11px;white-space:pre;letter-spacing:-0.765px;color:#0a1630;">Numero</div>
<div style="left:1302px;top:783px;width:204px;height:31px;background:#c1e2ff;border:1px solid #718bab;"></div>
<div style="left:1188.5px;top:692.99px;line-height:14px;font-size:11px;white-space:pre;letter-spacing:-0.417px;color:#0a1630;">Data</div>
<div style="left:1302px;top:688px;width:204px;height:31px;background:#c1e2ff;border:1px solid #718bab;"></div>
<div style="left:1318.5px;top:691.70px;line-height:14px;font-size:10.5px;white-space:pre;font-family:'Liberation Mono',monospace;letter-spacing:0.7px;color:#111;">/</div>
<div style="left:1339.5px;top:691.70px;line-height:14px;font-size:10.5px;white-space:pre;font-family:'Liberation Mono',monospace;letter-spacing:0.7px;color:#111;">/</div>
<div style="left:1188.5px;top:824.99px;line-height:14px;font-size:11px;white-space:pre;letter-spacing:-0.417px;color:#0a1630;">Data</div>
<div style="left:1302px;top:820px;width:204px;height:33px;background:#c1e2ff;border:1px solid #718bab;"></div>
<div style="left:1318.5px;top:823.70px;line-height:14px;font-size:10.5px;white-space:pre;font-family:'Liberation Mono',monospace;letter-spacing:0.7px;color:#111;">/</div>
<div style="left:1339.5px;top:823.70px;line-height:14px;font-size:10.5px;white-space:pre;font-family:'Liberation Mono',monospace;letter-spacing:0.7px;color:#111;">/</div>
<div style="left:1192px;top:913px;width:310px;height:33px;background:#c1e2ff;border:1px solid #718bab;"></div>
<div style="left:1537px;top:146px;width:383px;height:861px;background:#b0cfee;"></div>
<div style="left:1542px;top:151.19px;line-height:14px;font-size:11px;white-space:pre;letter-spacing:-0.355px;">Periodo:</div>
<div style="left:1633px;top:147px;width:267px;height:26px;background:#c1e2ff;border:1px solid #718bab;border-radius:1px;"></div>
<div style="left:1637px;top:151.19px;line-height:14px;font-size:11px;white-space:pre;letter-spacing:-0.362px;">Dall&#x27;inizio</div>
<svg style="left:1887px;top:159px;" width="9" height="5" viewBox="0 0 9 5"><path d="M0 0h8L4 4.500z" fill="#000"/></svg>
<div style="left:1538px;top:182px;width:362px;height:821px;background:#f0f0f0;border:1px solid #6f83a0;box-shadow:inset 0 0 0 1px #fff;"></div>
<div style="left:1546px;top:190px;width:346px;height:804px;background:#fff;border:1px solid #fdfdfd;border-top:2px solid #696969;border-left:2px solid #696969;"></div>
<div style="left:1548px;top:192px;width:325px;height:40px;background:#efefef;"></div>
<div style="left:1548px;top:252px;width:325px;height:70px;background:#efefef;"></div>
<div style="left:1548px;top:342px;width:325px;height:20px;background:#efefef;"></div>
<div style="left:1548px;top:402px;width:325px;height:20px;background:#efefef;"></div>
<div style="left:1548px;top:442px;width:325px;height:20px;background:#efefef;"></div>
<div style="left:1548px;top:482px;width:325px;height:20px;background:#efefef;"></div>
<div style="left:1548px;top:522px;width:325px;height:20px;background:#efefef;"></div>
<div style="left:1548px;top:562px;width:325px;height:20px;background:#efefef;"></div>
<div style="left:1548px;top:602px;width:325px;height:20px;background:#efefef;"></div>
<div style="left:1548px;top:642px;width:325px;height:20px;background:#efefef;"></div>
<div style="left:1548px;top:682px;width:325px;height:40px;background:#efefef;"></div>
<div style="left:1548px;top:742px;width:325px;height:20px;background:#efefef;"></div>
<div style="left:1548px;top:782px;width:325px;height:20px;background:#efefef;"></div>
<div style="left:1548px;top:822px;width:325px;height:20px;background:#efefef;"></div>
<div style="left:1548px;top:862px;width:325px;height:20px;background:#efefef;"></div>
<div style="left:1548px;top:902px;width:325px;height:20px;background:#efefef;"></div>
<div style="left:1548px;top:942px;width:325px;height:20px;background:#efefef;"></div>
<div style="left:1548px;top:982px;width:325px;height:11px;background:#efefef;"></div>
<div style="left:1874px;top:192px;width:16px;height:801px;background:#f0f0f0;"></div>
<div style="left:1874px;top:209px;width:15px;height:758px;background:#cdcdcd;"></div>
<svg style="left:1877.5px;top:197.5px;" width="9" height="7" viewBox="0 0 9 7"><path d="M0.800 5.800L4 2.200l3.200 3.600" stroke="#505050" stroke-width="2" fill="none"/></svg>
<svg style="left:1877.5px;top:980.5px;" width="9" height="7" viewBox="0 0 9 7"><path d="M0.800 1.200L4 4.800l3.200-3.600" stroke="#505050" stroke-width="2" fill="none"/></svg>
<div style="left:1583px;top:256px;width:290px;height:16px;background:linear-gradient(#e6e6e6 0%,#d2d2d2 48%,#bcbcbc 52%,#aaaaaa 100%);"></div>
<div style="left:1575px;top:212px;width:1px;height:781px;background:repeating-linear-gradient(180deg,#bababa 0 1px,transparent 1px 2px);"></div>
<div style="left:1594px;top:272px;width:1px;height:222px;background:repeating-linear-gradient(180deg,#bababa 0 1px,transparent 1px 2px);"></div>
<div style="left:1613px;top:292px;width:1px;height:82px;background:repeating-linear-gradient(180deg,#bababa 0 1px,transparent 1px 2px);"></div>
<div style="left:1594px;top:702px;width:1px;height:132px;background:repeating-linear-gradient(180deg,#bababa 0 1px,transparent 1px 2px);"></div>
<div style="left:1587.3px;top:196.19px;line-height:14px;font-size:11px;white-space:pre;letter-spacing:-0.154px;">Cliente: 000001 CLIENTE PROVA NOME</div>
<svg style="left:1552px;top:198.5px;" width="9" height="9" viewBox="0 0 9 9"><rect x="0.500" y="0.500" width="8" height="8" rx="1.300" fill="#fff" stroke="#111" stroke-width="1.100"/><path d="M2 4.500h5" stroke="#111" stroke-width="1.200"/></svg>
<svg style="left:1564px;top:194px;" width="17" height="17" viewBox="0 0 17 17"><circle cx="8.500" cy="8.500" r="8" fill="#3f7fd0"/><path d="M1 8c2-5 8-7 13-4-1 3-4 4-6 3s-5-1-7 1z" fill="#9cc7f2"/><circle cx="12" cy="4.500" r="2.300" fill="#ffe24a"/><path d="M3 9l2 5 2.500-4 2.500 4 2-6" stroke="#fff" stroke-width="1.800" fill="none"/></svg>
<svg style="left:1583px;top:214px;" width="16" height="16" viewBox="0 0 16 16"><path d="M0.500 3.500v-2l1-1h4l1.500 2z" fill="#e8c27a" stroke="#d9a94f" stroke-width=".8"/><rect x="0.500" y="2.500" width="15" height="13" fill="#f6cf85" stroke="#e0ad55" stroke-width="1"/><path d="M3.500 9.500h9" stroke="#cf9a48" stroke-width="1"/></svg>
<div style="left:1606.6px;top:216.69px;line-height:14px;font-size:11px;white-space:pre;letter-spacing:-0.335px;">Contratti</div>
<div style="left:1576px;top:223px;width:7px;height:1px;background:repeating-linear-gradient(90deg,#bababa 0 1px,transparent 1px 2px);"></div>
<svg style="left:1583px;top:234px;" width="16" height="16" viewBox="0 0 16 16"><path d="M0.500 3.500v-2l1-1h4l1.500 2z" fill="#e8c27a" stroke="#d9a94f" stroke-width=".8"/><rect x="0.500" y="2.500" width="15" height="13" fill="#f6cf85" stroke="#e0ad55" stroke-width="1"/><path d="M3.500 9.500h9" stroke="#cf9a48" stroke-width="1"/></svg>
<div style="left:1606.6px;top:236.69px;line-height:14px;font-size:11px;white-space:pre;letter-spacing:-0.191px;">Piano dei controlli</div>
<div style="left:1576px;top:243px;width:7px;height:1px;background:repeating-linear-gradient(90deg,#bababa 0 1px,transparent 1px 2px);"></div>
<svg style="left:1583px;top:254px;" width="16" height="16" viewBox="0 0 16 16"><path d="M0.500 3.500v-2l1-1h4l1.500 2z" fill="#e8c27a" stroke="#d9a94f" stroke-width=".8"/><rect x="0.500" y="2.500" width="15" height="13" fill="#f6cf85" stroke="#e0ad55" stroke-width="1"/><path d="M3.500 9.500h9" stroke="#cf9a48" stroke-width="1"/></svg>
<div style="left:1606.6px;top:256.69px;line-height:14px;font-size:11px;white-space:pre;letter-spacing:-0.454px;">Chiamate</div>
<div style="left:1576px;top:263px;width:7px;height:1px;background:repeating-linear-gradient(90deg,#bababa 0 1px,transparent 1px 2px);"></div>
<svg style="left:1571px;top:258.5px;" width="9" height="9" viewBox="0 0 9 9"><rect x="0.500" y="0.500" width="8" height="8" rx="1.300" fill="#fff" stroke="#111" stroke-width="1.100"/><path d="M2 4.500h5" stroke="#111" stroke-width="1.200"/></svg>
<svg style="left:1590px;top:278.5px;" width="9" height="9" viewBox="0 0 9 9"><rect x="0.500" y="0.500" width="8" height="8" rx="1.300" fill="#fff" stroke="#111" stroke-width="1.100"/><path d="M2 4.500h5" stroke="#111" stroke-width="1.200"/></svg>
<svg style="left:1602px;top:274px;" width="16" height="16" viewBox="0 0 16 16"><path d="M0.500 3.500v-2l1-1h4l1.500 2z" fill="#e8c27a" stroke="#d9a94f" stroke-width=".8"/><rect x="0.500" y="2.500" width="15" height="13" fill="#f6cf85" stroke="#e0ad55" stroke-width="1"/><path d="M3.500 9.500h9" stroke="#cf9a48" stroke-width="1"/></svg>
<div style="left:1626px;top:276.19px;line-height:14px;font-size:11px;white-space:pre;letter-spacing:-0.161px;">2024</div>
<svg style="left:1619.1px;top:298.1px;" width="20" height="17.8" viewBox="0 0 18 16"><path d="M2 3.500L4.500 1 9 5.500 13.500 1 16 3.500 11.500 8 16 12.500 13.500 15 9 10.500 4.500 15 2 12.500 6.500 8z" fill="#e3232b" stroke="#b3121a" stroke-width=".8" stroke-linejoin="round"/><path d="M3.300 3.500l1.200-1.200L9 6.800l4.500-4.500 1.200 1.200" stroke="#f77" stroke-width="1.100" fill="none"/><path d="M3.300 12.500l1.200 1.200L9 9.200l4.500 4.500 1.200-1.200" stroke="#c4141c" stroke-width="1" fill="none"/></svg>
<div style="left:1614px;top:307px;width:6px;height:1px;background:repeating-linear-gradient(90deg,#bababa 0 1px,transparent 1px 2px);"></div>
<div style="left:1645.3px;top:296.69px;line-height:14px;font-size:11px;white-space:pre;letter-spacing:-0.95px;">37</div>
<div style="left:1660.4px;top:296.69px;line-height:14px;font-size:11px;white-space:pre;letter-spacing:-0.337px;">Appunt.</div>
<div style="left:1700.3px;top:296.69px;line-height:14px;font-size:11px;white-space:pre;letter-spacing:0.361px;">26/11/2024</div>
<div style="left:1761.5px;top:296.69px;line-height:14px;font-size:11px;white-space:pre;letter-spacing:-0.19px;">Richiesta di intervento.</div>
<svg style="left:1619.1px;top:323.1px;" width="20" height="17.8" viewBox="0 0 18 16"><path d="M2 3.500L4.500 1 9 5.500 13.500 1 16 3.500 11.500 8 16 12.500 13.500 15 9 10.500 4.500 15 2 12.500 6.500 8z" fill="#e3232b" stroke="#b3121a" stroke-width=".8" stroke-linejoin="round"/><path d="M3.300 3.500l1.200-1.200L9 6.800l4.500-4.500 1.200 1.200" stroke="#f77" stroke-width="1.100" fill="none"/><path d="M3.300 12.500l1.200 1.200L9 9.200l4.500 4.500 1.200-1.200" stroke="#c4141c" stroke-width="1" fill="none"/></svg>
<div style="left:1614px;top:332px;width:6px;height:1px;background:repeating-linear-gradient(90deg,#bababa 0 1px,transparent 1px 2px);"></div>
<div style="left:1645.3px;top:326.69px;line-height:14px;font-size:11px;white-space:pre;letter-spacing:-0.53px;">352</div>
<div style="left:1666.7px;top:326.69px;line-height:14px;font-size:11px;white-space:pre;letter-spacing:-0.37px;">Appunt.</div>
<div style="left:1706.4px;top:326.69px;line-height:14px;font-size:11px;white-space:pre;letter-spacing:0.361px;">26/11/2024</div>
<div style="left:1767.5px;top:326.69px;line-height:14px;font-size:11px;white-space:pre;letter-spacing:-0.169px;">NO acqua calda</div>
<svg style="left:1619.1px;top:343.1px;" width="20" height="17.8" viewBox="0 0 18 16"><path d="M2 3.500L4.500 1 9 5.500 13.500 1 16 3.500 11.500 8 16 12.500 13.500 15 9 10.500 4.500 15 2 12.500 6.500 8z" fill="#e3232b" stroke="#b3121a" stroke-width=".8" stroke-linejoin="round"/><path d="M3.300 3.500l1.200-1.200L9 6.800l4.500-4.500 1.200 1.200" stroke="#f77" stroke-width="1.100" fill="none"/><path d="M3.300 12.500l1.200 1.200L9 9.200l4.500 4.500 1.200-1.200" stroke="#c4141c" stroke-width="1" fill="none"/></svg>
<div style="left:1614px;top:352px;width:6px;height:1px;background:repeating-linear-gradient(90deg,#bababa 0 1px,transparent 1px 2px);"></div>
<div style="left:1645.3px;top:346.69px;line-height:14px;font-size:11px;white-space:pre;letter-spacing:-0.95px;">32</div>
<div style="left:1660.4px;top:346.69px;line-height:14px;font-size:11px;white-space:pre;letter-spacing:-0.337px;">Appunt.</div>
<div style="left:1700.3px;top:346.69px;line-height:14px;font-size:11px;white-space:pre;letter-spacing:0.361px;">18/11/2024</div>
<svg style="left:1619.1px;top:363.1px;" width="20" height="17.8" viewBox="0 0 18 16"><path d="M2 3.500L4.500 1 9 5.500 13.500 1 16 3.500 11.500 8 16 12.500 13.500 15 9 10.500 4.500 15 2 12.500 6.500 8z" fill="#e3232b" stroke="#b3121a" stroke-width=".8" stroke-linejoin="round"/><path d="M3.300 3.500l1.200-1.200L9 6.800l4.500-4.500 1.200 1.200" stroke="#f77" stroke-width="1.100" fill="none"/><path d="M3.300 12.500l1.200 1.200L9 9.200l4.500 4.500 1.200-1.200" stroke="#c4141c" stroke-width="1" fill="none"/></svg>
<div style="left:1614px;top:372px;width:6px;height:1px;background:repeating-linear-gradient(90deg,#bababa 0 1px,transparent 1px 2px);"></div>
<div style="left:1645.3px;top:366.69px;line-height:14px;font-size:11px;white-space:pre;letter-spacing:-0.53px;">135</div>
<div style="left:1666.7px;top:366.69px;line-height:14px;font-size:11px;white-space:pre;letter-spacing:-0.37px;">Appunt.</div>
<div style="left:1706.4px;top:366.69px;line-height:14px;font-size:11px;white-space:pre;letter-spacing:0.271px;">16/10/2024</div>
<div style="left:1767.5px;top:366.69px;line-height:14px;font-size:11px;white-space:pre;letter-spacing:-0.372px;">ERRORE</div>
<div style="left:1871px;top:299px;width:2px;height:14px;background:#f3e7a0;"></div>
<svg style="left:1590px;top:388.5px;" width="9" height="9" viewBox="0 0 9 9"><rect x="0.500" y="0.500" width="8" height="8" rx="1.300" fill="#fff" stroke="#111" stroke-width="1.100"/><path d="M2 4.500h5" stroke="#111" stroke-width="1.200"/><path d="M4.500 2v5" stroke="#111" stroke-width="1.200"/></svg>
<svg style="left:1602px;top:384px;" width="16" height="16" viewBox="0 0 16 16"><path d="M0.500 3.500v-2l1-1h4l1.500 2z" fill="#e8c27a" stroke="#d9a94f" stroke-width=".8"/><rect x="0.500" y="2.500" width="15" height="13" fill="#f6cf85" stroke="#e0ad55" stroke-width="1"/><path d="M3.500 9.500h9" stroke="#cf9a48" stroke-width="1"/></svg>
<div style="left:1626px;top:386.19px;line-height:14px;font-size:11px;white-space:pre;letter-spacing:-0.161px;">2021</div>
<svg style="left:1590px;top:408.5px;" width="9" height="9" viewBox="0 0 9 9"><rect x="0.500" y="0.500" width="8" height="8" rx="1.300" fill="#fff" stroke="#111" stroke-width="1.100"/><path d="M2 4.500h5" stroke="#111" stroke-width="1.200"/><path d="M4.500 2v5" stroke="#111" stroke-width="1.200"/></svg>
<svg style="left:1602px;top:404px;" width="16" height="16" viewBox="0 0 16 16"><path d="M0.500 3.500v-2l1-1h4l1.500 2z" fill="#e8c27a" stroke="#d9a94f" stroke-width=".8"/><rect x="0.500" y="2.500" width="15" height="13" fill="#f6cf85" stroke="#e0ad55" stroke-width="1"/><path d="M3.500 9.500h9" stroke="#cf9a48" stroke-width="1"/></svg>
<div style="left:1626px;top:406.19px;line-height:14px;font-size:11px;white-space:pre;letter-spacing:-0.161px;">2017</div>
<svg style="left:1590px;top:428.5px;" width="9" height="9" viewBox="0 0 9 9"><rect x="0.500" y="0.500" width="8" height="8" rx="1.300" fill="#fff" stroke="#111" stroke-width="1.100"/><path d="M2 4.500h5" stroke="#111" stroke-width="1.200"/><path d="M4.500 2v5" stroke="#111" stroke-width="1.200"/></svg>
<svg style="left:1602px;top:424px;" width="16" height="16" viewBox="0 0 16 16"><path d="M0.500 3.500v-2l1-1h4l1.500 2z" fill="#e8c27a" stroke="#d9a94f" stroke-width=".8"/><rect x="0.500" y="2.500" width="15" height="13" fill="#f6cf85" stroke="#e0ad55" stroke-width="1"/><path d="M3.500 9.500h9" stroke="#cf9a48" stroke-width="1"/></svg>
<div style="left:1626px;top:426.19px;line-height:14px;font-size:11px;white-space:pre;letter-spacing:-0.161px;">2016</div>
<svg style="left:1590px;top:448.5px;" width="9" height="9" viewBox="0 0 9 9"><rect x="0.500" y="0.500" width="8" height="8" rx="1.300" fill="#fff" stroke="#111" stroke-width="1.100"/><path d="M2 4.500h5" stroke="#111" stroke-width="1.200"/><path d="M4.500 2v5" stroke="#111" stroke-width="1.200"/></svg>
<svg style="left:1602px;top:444px;" width="16" height="16" viewBox="0 0 16 16"><path d="M0.500 3.500v-2l1-1h4l1.500 2z" fill="#e8c27a" stroke="#d9a94f" stroke-width=".8"/><rect x="0.500" y="2.500" width="15" height="13" fill="#f6cf85" stroke="#e0ad55" stroke-width="1"/><path d="M3.500 9.500h9" stroke="#cf9a48" stroke-width="1"/></svg>
<div style="left:1626px;top:446.19px;line-height:14px;font-size:11px;white-space:pre;letter-spacing:-0.161px;">2015</div>
<svg style="left:1590px;top:468.5px;" width="9" height="9" viewBox="0 0 9 9"><rect x="0.500" y="0.500" width="8" height="8" rx="1.300" fill="#fff" stroke="#111" stroke-width="1.100"/><path d="M2 4.500h5" stroke="#111" stroke-width="1.200"/><path d="M4.500 2v5" stroke="#111" stroke-width="1.200"/></svg>
<svg style="left:1602px;top:464px;" width="16" height="16" viewBox="0 0 16 16"><path d="M0.500 3.500v-2l1-1h4l1.500 2z" fill="#e8c27a" stroke="#d9a94f" stroke-width=".8"/><rect x="0.500" y="2.500" width="15" height="13" fill="#f6cf85" stroke="#e0ad55" stroke-width="1"/><path d="M3.500 9.500h9" stroke="#cf9a48" stroke-width="1"/></svg>
<div style="left:1626px;top:466.19px;line-height:14px;font-size:11px;white-space:pre;letter-spacing:-0.161px;">2014</div>
<svg style="left:1590px;top:488.5px;" width="9" height="9" viewBox="0 0 9 9"><rect x="0.500" y="0.500" width="8" height="8" rx="1.300" fill="#fff" stroke="#111" stroke-width="1.100"/><path d="M2 4.500h5" stroke="#111" stroke-width="1.200"/><path d="M4.500 2v5" stroke="#111" stroke-width="1.200"/></svg>
<svg style="left:1602px;top:484px;" width="16" height="16" viewBox="0 0 16 16"><path d="M0.500 3.500v-2l1-1h4l1.500 2z" fill="#e8c27a" stroke="#d9a94f" stroke-width=".8"/><rect x="0.500" y="2.500" width="15" height="13" fill="#f6cf85" stroke="#e0ad55" stroke-width="1"/><path d="M3.500 9.500h9" stroke="#cf9a48" stroke-width="1"/></svg>
<div style="left:1626px;top:486.19px;line-height:14px;font-size:11px;white-space:pre;letter-spacing:-0.161px;">2013</div>
<svg style="left:1583px;top:504px;" width="16" height="16" viewBox="0 0 16 16"><path d="M0.500 3.500v-2l1-1h4l1.500 2z" fill="#e8c27a" stroke="#d9a94f" stroke-width=".8"/><rect x="0.500" y="2.500" width="15" height="13" fill="#f6cf85" stroke="#e0ad55" stroke-width="1"/><path d="M3.500 9.500h9" stroke="#cf9a48" stroke-width="1"/></svg>
<div style="left:1606.6px;top:506.69px;line-height:14px;font-size:11px;white-space:pre;letter-spacing:-0.305px;">Manutenzioni programmate</div>
<div style="left:1576px;top:513px;width:7px;height:1px;background:repeating-linear-gradient(90deg,#bababa 0 1px,transparent 1px 2px);"></div>
<svg style="left:1583px;top:524px;" width="16" height="16" viewBox="0 0 16 16"><path d="M0.500 3.500v-2l1-1h4l1.500 2z" fill="#e8c27a" stroke="#d9a94f" stroke-width=".8"/><rect x="0.500" y="2.500" width="15" height="13" fill="#f6cf85" stroke="#e0ad55" stroke-width="1"/><path d="M3.500 9.500h9" stroke="#cf9a48" stroke-width="1"/></svg>
<div style="left:1606.6px;top:526.69px;line-height:14px;font-size:11px;white-space:pre;letter-spacing:-0.306px;">Reclami</div>
<div style="left:1576px;top:533px;width:7px;height:1px;background:repeating-linear-gradient(90deg,#bababa 0 1px,transparent 1px 2px);"></div>
<svg style="left:1583px;top:544px;" width="16" height="16" viewBox="0 0 16 16"><path d="M0.500 3.500v-2l1-1h4l1.500 2z" fill="#e8c27a" stroke="#d9a94f" stroke-width=".8"/><rect x="0.500" y="2.500" width="15" height="13" fill="#f6cf85" stroke="#e0ad55" stroke-width="1"/><path d="M3.500 9.500h9" stroke="#cf9a48" stroke-width="1"/></svg>
<div style="left:1606.6px;top:546.69px;line-height:14px;font-size:11px;white-space:pre;letter-spacing:-0.723px;">Promemoria</div>
<div style="left:1576px;top:553px;width:7px;height:1px;background:repeating-linear-gradient(90deg,#bababa 0 1px,transparent 1px 2px);"></div>
<svg style="left:1583px;top:564px;" width="16" height="16" viewBox="0 0 16 16"><path d="M0.500 3.500v-2l1-1h4l1.500 2z" fill="#e8c27a" stroke="#d9a94f" stroke-width=".8"/><rect x="0.500" y="2.500" width="15" height="13" fill="#f6cf85" stroke="#e0ad55" stroke-width="1"/><path d="M3.500 9.500h9" stroke="#cf9a48" stroke-width="1"/></svg>
<div style="left:1606.6px;top:566.69px;line-height:14px;font-size:11px;white-space:pre;letter-spacing:-0.094px;">Interventi</div>
<div style="left:1576px;top:573px;width:7px;height:1px;background:repeating-linear-gradient(90deg,#bababa 0 1px,transparent 1px 2px);"></div>
<svg style="left:1583px;top:584px;" width="16" height="16" viewBox="0 0 16 16"><path d="M0.500 3.500v-2l1-1h4l1.500 2z" fill="#e8c27a" stroke="#d9a94f" stroke-width=".8"/><rect x="0.500" y="2.500" width="15" height="13" fill="#f6cf85" stroke="#e0ad55" stroke-width="1"/><path d="M3.500 9.500h9" stroke="#cf9a48" stroke-width="1"/></svg>
<div style="left:1606.6px;top:586.69px;line-height:14px;font-size:11px;white-space:pre;letter-spacing:-0.243px;">Fatture</div>
<div style="left:1576px;top:593px;width:7px;height:1px;background:repeating-linear-gradient(90deg,#bababa 0 1px,transparent 1px 2px);"></div>
<svg style="left:1583px;top:604px;" width="16" height="16" viewBox="0 0 16 16"><path d="M0.500 3.500v-2l1-1h4l1.500 2z" fill="#e8c27a" stroke="#d9a94f" stroke-width=".8"/><rect x="0.500" y="2.500" width="15" height="13" fill="#f6cf85" stroke="#e0ad55" stroke-width="1"/><path d="M3.500 9.500h9" stroke="#cf9a48" stroke-width="1"/></svg>
<div style="left:1606.6px;top:606.69px;line-height:14px;font-size:11px;white-space:pre;letter-spacing:-0.337px;">Pagamenti</div>
<div style="left:1576px;top:613px;width:7px;height:1px;background:repeating-linear-gradient(90deg,#bababa 0 1px,transparent 1px 2px);"></div>
<svg style="left:1583px;top:624px;" width="16" height="16" viewBox="0 0 16 16"><path d="M0.500 3.500v-2l1-1h4l1.500 2z" fill="#e8c27a" stroke="#d9a94f" stroke-width=".8"/><rect x="0.500" y="2.500" width="15" height="13" fill="#f6cf85" stroke="#e0ad55" stroke-width="1"/><path d="M3.500 9.500h9" stroke="#cf9a48" stroke-width="1"/></svg>
<div style="left:1606.6px;top:626.69px;line-height:14px;font-size:11px;white-space:pre;letter-spacing:-0.155px;">Preventivi</div>
<div style="left:1576px;top:633px;width:7px;height:1px;background:repeating-linear-gradient(90deg,#bababa 0 1px,transparent 1px 2px);"></div>
<svg style="left:1583px;top:644px;" width="16" height="16" viewBox="0 0 16 16"><path d="M0.500 3.500v-2l1-1h4l1.500 2z" fill="#e8c27a" stroke="#d9a94f" stroke-width=".8"/><rect x="0.500" y="2.500" width="15" height="13" fill="#f6cf85" stroke="#e0ad55" stroke-width="1"/><path d="M3.500 9.500h9" stroke="#cf9a48" stroke-width="1"/></svg>
<div style="left:1606.6px;top:646.69px;line-height:14px;font-size:11px;white-space:pre;letter-spacing:-0.604px;">Commesse</div>
<div style="left:1576px;top:653px;width:7px;height:1px;background:repeating-linear-gradient(90deg,#bababa 0 1px,transparent 1px 2px);"></div>
<svg style="left:1583px;top:664px;" width="16" height="16" viewBox="0 0 16 16"><path d="M0.500 3.500v-2l1-1h4l1.500 2z" fill="#e8c27a" stroke="#d9a94f" stroke-width=".8"/><rect x="0.500" y="2.500" width="15" height="13" fill="#f6cf85" stroke="#e0ad55" stroke-width="1"/><path d="M3.500 9.500h9" stroke="#cf9a48" stroke-width="1"/></svg>
<div style="left:1606.6px;top:666.69px;line-height:14px;font-size:11px;white-space:pre;letter-spacing:-0.182px;">Documenti di Trasporto</div>
<div style="left:1576px;top:673px;width:7px;height:1px;background:repeating-linear-gradient(90deg,#bababa 0 1px,transparent 1px 2px);"></div>
<svg style="left:1583px;top:684px;" width="16" height="16" viewBox="0 0 16 16"><path d="M0.500 3.500v-2l1-1h4l1.500 2z" fill="#e8c27a" stroke="#d9a94f" stroke-width=".8"/><rect x="0.500" y="2.500" width="15" height="13" fill="#f6cf85" stroke="#e0ad55" stroke-width="1"/><path d="M3.500 9.500h9" stroke="#cf9a48" stroke-width="1"/></svg>
<div style="left:1606.6px;top:686.69px;line-height:14px;font-size:11px;white-space:pre;letter-spacing:-0.158px;">Apparecchiature</div>
<div style="left:1576px;top:693px;width:7px;height:1px;background:repeating-linear-gradient(90deg,#bababa 0 1px,transparent 1px 2px);"></div>
<svg style="left:1571px;top:688.5px;" width="9" height="9" viewBox="0 0 9 9"><rect x="0.500" y="0.500" width="8" height="8" rx="1.300" fill="#fff" stroke="#111" stroke-width="1.100"/><path d="M2 4.500h5" stroke="#111" stroke-width="1.200"/></svg>
<svg style="left:1603.5px;top:705px;" width="13" height="13" viewBox="0 0 13 13"><circle cx="6.500" cy="6.500" r="6" fill="#0b8a0b"/><circle cx="6.500" cy="6.500" r="4.600" fill="#2fd42f"/><circle cx="5.500" cy="5" r="2.200" fill="#8cf08c"/></svg>
<div style="left:1626px;top:706.69px;line-height:14px;font-size:11px;white-space:pre;letter-spacing:-0.27px;">- 123</div>
<div style="left:1595px;top:713px;width:8px;height:1px;background:repeating-linear-gradient(90deg,#bababa 0 1px,transparent 1px 2px);"></div>
<svg style="left:1603.5px;top:725px;" width="13" height="13" viewBox="0 0 13 13"><circle cx="6.500" cy="6.500" r="6" fill="#0b8a0b"/><circle cx="6.500" cy="6.500" r="4.600" fill="#2fd42f"/><circle cx="5.500" cy="5" r="2.200" fill="#8cf08c"/></svg>
<div style="left:1626px;top:726.69px;line-height:14px;font-size:11px;white-space:pre;letter-spacing:-0.672px;">-</div>
<div style="left:1595px;top:733px;width:8px;height:1px;background:repeating-linear-gradient(90deg,#bababa 0 1px,transparent 1px 2px);"></div>
<svg style="left:1603.5px;top:745px;" width="13" height="13" viewBox="0 0 13 13"><circle cx="6.500" cy="6.500" r="6" fill="#0b8a0b"/><circle cx="6.500" cy="6.500" r="4.600" fill="#2fd42f"/><circle cx="5.500" cy="5" r="2.200" fill="#8cf08c"/></svg>
<div style="left:1626px;top:746.69px;line-height:14px;font-size:11px;white-space:pre;letter-spacing:-0.672px;">-</div>
<div style="left:1595px;top:753px;width:8px;height:1px;background:repeating-linear-gradient(90deg,#bababa 0 1px,transparent 1px 2px);"></div>
<svg style="left:1603.5px;top:765px;" width="13" height="13" viewBox="0 0 13 13"><circle cx="6.500" cy="6.500" r="6" fill="#0b8a0b"/><circle cx="6.500" cy="6.500" r="4.600" fill="#2fd42f"/><circle cx="5.500" cy="5" r="2.200" fill="#8cf08c"/></svg>
<div style="left:1626px;top:766.69px;line-height:14px;font-size:11px;white-space:pre;letter-spacing:-0.092px;">ATAG ABC1 - 123456789</div>
<div style="left:1595px;top:773px;width:8px;height:1px;background:repeating-linear-gradient(90deg,#bababa 0 1px,transparent 1px 2px);"></div>
<svg style="left:1603.5px;top:785px;" width="13" height="13" viewBox="0 0 13 13"><circle cx="6.500" cy="6.500" r="6" fill="#0b8a0b"/><circle cx="6.500" cy="6.500" r="4.600" fill="#2fd42f"/><circle cx="5.500" cy="5" r="2.200" fill="#8cf08c"/></svg>
<div style="left:1626px;top:786.69px;line-height:14px;font-size:11px;white-space:pre;letter-spacing:-0.251px;">CALEFFI fffvfdx - xxc</div>
<div style="left:1595px;top:793px;width:8px;height:1px;background:repeating-linear-gradient(90deg,#bababa 0 1px,transparent 1px 2px);"></div>
<svg style="left:1603.5px;top:805px;" width="13" height="13" viewBox="0 0 13 13"><circle cx="6.500" cy="6.500" r="6" fill="#0b8a0b"/><circle cx="6.500" cy="6.500" r="4.600" fill="#2fd42f"/><circle cx="5.500" cy="5" r="2.200" fill="#8cf08c"/></svg>
<div style="left:1626px;top:806.69px;line-height:14px;font-size:11px;white-space:pre;letter-spacing:-0.197px;">FUSORE ATOMICO - 123</div>
<div style="left:1595px;top:813px;width:8px;height:1px;background:repeating-linear-gradient(90deg,#bababa 0 1px,transparent 1px 2px);"></div>
<svg style="left:1603.5px;top:825px;" width="13" height="13" viewBox="0 0 13 13"><circle cx="6.500" cy="6.500" r="6" fill="#0b8a0b"/><circle cx="6.500" cy="6.500" r="4.600" fill="#2fd42f"/><circle cx="5.500" cy="5" r="2.200" fill="#8cf08c"/></svg>
<div style="left:1626px;top:826.69px;line-height:14px;font-size:11px;white-space:pre;letter-spacing:-0.177px;">GAIA Aria - 123456789</div>
<div style="left:1595px;top:833px;width:8px;height:1px;background:repeating-linear-gradient(90deg,#bababa 0 1px,transparent 1px 2px);"></div>
<svg style="left:1583px;top:844px;" width="16" height="16" viewBox="0 0 16 16"><path d="M0.500 3.500v-2l1-1h4l1.500 2z" fill="#e8c27a" stroke="#d9a94f" stroke-width=".8"/><rect x="0.500" y="2.500" width="15" height="13" fill="#f6cf85" stroke="#e0ad55" stroke-width="1"/><path d="M3.500 9.500h9" stroke="#cf9a48" stroke-width="1"/></svg>
<div style="left:1606.6px;top:846.69px;line-height:14px;font-size:11px;white-space:pre;letter-spacing:-0.157px;">Rilievi</div>
<div style="left:1576px;top:853px;width:7px;height:1px;background:repeating-linear-gradient(90deg,#bababa 0 1px,transparent 1px 2px);"></div>
<svg style="left:1583px;top:864px;" width="16" height="16" viewBox="0 0 16 16"><path d="M0.500 3.500v-2l1-1h4l1.500 2z" fill="#e8c27a" stroke="#d9a94f" stroke-width=".8"/><rect x="0.500" y="2.500" width="15" height="13" fill="#f6cf85" stroke="#e0ad55" stroke-width="1"/><path d="M3.500 9.500h9" stroke="#cf9a48" stroke-width="1"/></svg>
<div style="left:1606.6px;top:866.69px;line-height:14px;font-size:11px;white-space:pre;letter-spacing:-0.287px;">Ordini in corso</div>
<div style="left:1576px;top:873px;width:7px;height:1px;background:repeating-linear-gradient(90deg,#bababa 0 1px,transparent 1px 2px);"></div>
<svg style="left:1583px;top:884px;" width="16" height="16" viewBox="0 0 16 16"><path d="M0.500 3.500v-2l1-1h4l1.500 2z" fill="#e8c27a" stroke="#d9a94f" stroke-width=".8"/><rect x="0.500" y="2.500" width="15" height="13" fill="#f6cf85" stroke="#e0ad55" stroke-width="1"/><path d="M3.500 9.500h9" stroke="#cf9a48" stroke-width="1"/></svg>
<div style="left:1606.6px;top:886.69px;line-height:14px;font-size:11px;white-space:pre;letter-spacing:-0.164px;">Articoli da consegnare</div>
<div style="left:1576px;top:893px;width:7px;height:1px;background:repeating-linear-gradient(90deg,#bababa 0 1px,transparent 1px 2px);"></div>
<svg style="left:1583px;top:904px;" width="16" height="16" viewBox="0 0 16 16"><path d="M0.500 3.500v-2l1-1h4l1.500 2z" fill="#e8c27a" stroke="#d9a94f" stroke-width=".8"/><rect x="0.500" y="2.500" width="15" height="13" fill="#f6cf85" stroke="#e0ad55" stroke-width="1"/><path d="M3.500 9.500h9" stroke="#cf9a48" stroke-width="1"/></svg>
<div style="left:1606.6px;top:906.69px;line-height:14px;font-size:11px;white-space:pre;letter-spacing:-0.117px;">Vendita Articoli</div>
<div style="left:1576px;top:913px;width:7px;height:1px;background:repeating-linear-gradient(90deg,#bababa 0 1px,transparent 1px 2px);"></div>
<svg style="left:1583px;top:924px;" width="16" height="16" viewBox="0 0 16 16"><path d="M0.500 3.500v-2l1-1h4l1.500 2z" fill="#e8c27a" stroke="#d9a94f" stroke-width=".8"/><rect x="0.500" y="2.500" width="15" height="13" fill="#f6cf85" stroke="#e0ad55" stroke-width="1"/><path d="M3.500 9.500h9" stroke="#cf9a48" stroke-width="1"/></svg>
<div style="left:1606.6px;top:926.69px;line-height:14px;font-size:11px;white-space:pre;letter-spacing:-0.239px;">File Allegati</div>
<div style="left:1576px;top:933px;width:7px;height:1px;background:repeating-linear-gradient(90deg,#bababa 0 1px,transparent 1px 2px);"></div>
<svg style="left:1583px;top:944px;" width="16" height="16" viewBox="0 0 16 16"><path d="M0.500 3.500v-2l1-1h4l1.500 2z" fill="#e8c27a" stroke="#d9a94f" stroke-width=".8"/><rect x="0.500" y="2.500" width="15" height="13" fill="#f6cf85" stroke="#e0ad55" stroke-width="1"/><path d="M3.500 9.500h9" stroke="#cf9a48" stroke-width="1"/></svg>
<div style="left:1606.6px;top:946.69px;line-height:14px;font-size:11px;white-space:pre;letter-spacing:-0.285px;">Impianti Riscaldamento e Clima</div>
<div style="left:1576px;top:953px;width:7px;height:1px;background:repeating-linear-gradient(90deg,#bababa 0 1px,transparent 1px 2px);"></div>
<svg style="left:1583px;top:964px;" width="16" height="16" viewBox="0 0 16 16"><path d="M0.500 3.500v-2l1-1h4l1.500 2z" fill="#e8c27a" stroke="#d9a94f" stroke-width=".8"/><rect x="0.500" y="2.500" width="15" height="13" fill="#f6cf85" stroke="#e0ad55" stroke-width="1"/><path d="M3.500 9.500h9" stroke="#cf9a48" stroke-width="1"/></svg>
<div style="left:1606.6px;top:966.69px;line-height:14px;font-size:11px;white-space:pre;letter-spacing:-0.313px;">Comunicazioni</div>
<div style="left:1576px;top:973px;width:7px;height:1px;background:repeating-linear-gradient(90deg,#bababa 0 1px,transparent 1px 2px);"></div>
<div style="left:1548px;top:984px;width:325px;height:9px;overflow:hidden;background:#efefef;"><svg style="left:35px;top:0" width="16" height="16" viewBox="0 0 16 16"><path d="M0.500 3.500v-2l1-1h4l1.500 2z" fill="#e8c27a" stroke="#d9a94f" stroke-width=".8"/><rect x="0.500" y="2.500" width="15" height="13" fill="#f6cf85" stroke="#e0ad55" stroke-width="1"/><path d="M3.500 9.500h9" stroke="#cf9a48" stroke-width="1"/></svg><div style="left:58.600px;top:2px;font-size:11px;line-height:14px;white-space:pre;letter-spacing:-0.200px">Invii Massivi / Diretti</div></div>
<div style="left:1575px;top:982px;width:1px;height:11px;background:repeating-linear-gradient(180deg,#bababa 0 1px,transparent 1px 2px);"></div>
<div style="left:1576px;top:992px;width:7px;height:1px;background:repeating-linear-gradient(90deg,#bababa 0 1px,transparent 1px 2px);"></div>
<div style="left:1908px;top:145px;width:1px;height:873px;background:#eef5fd;"></div>
<div style="left:1909px;top:119px;width:11px;height:899px;background:#b0cfee;"></div>
<div style="left:1908.7px;top:260.5px;line-height:15px;height:15px;font-size:12px;white-space:pre;letter-spacing:0.013px;color:#000;transform-origin:0 0;transform:rotate(-90deg);">Primo Piano</div>
<svg style="left:1912px;top:509px;" width="4" height="6" viewBox="0 0 4 6"><path d="M3.500 0v5.200L0 2.600z" fill="#111"/></svg>
<div style="left:1913px;top:518px;width:1px;height:3px;background:#111;"></div>
<div style="left:1915px;top:518px;width:1px;height:3px;background:#111;"></div>
<div style="left:1913px;top:524px;width:1px;height:3px;background:#111;"></div>
<div style="left:1915px;top:524px;width:1px;height:3px;background:#111;"></div>
<div style="left:1913px;top:530px;width:1px;height:3px;background:#111;"></div>
<div style="left:1915px;top:530px;width:1px;height:3px;background:#111;"></div>
<div style="left:1913px;top:536px;width:1px;height:3px;background:#111;"></div>
<div style="left:1915px;top:536px;width:1px;height:3px;background:#111;"></div>
<div style="left:1913px;top:542px;width:1px;height:3px;background:#111;"></div>
<div style="left:1915px;top:542px;width:1px;height:3px;background:#111;"></div>
<div style="left:1913px;top:548px;width:1px;height:3px;background:#111;"></div>
<div style="left:1915px;top:548px;width:1px;height:3px;background:#111;"></div>
<div style="left:1913px;top:554px;width:1px;height:3px;background:#111;"></div>
<div style="left:1915px;top:554px;width:1px;height:3px;background:#111;"></div>
<div style="left:1913px;top:560px;width:1px;height:3px;background:#111;"></div>
<div style="left:1915px;top:560px;width:1px;height:3px;background:#111;"></div>
<div style="left:1913px;top:566px;width:1px;height:3px;background:#111;"></div>
<div style="left:1915px;top:566px;width:1px;height:3px;background:#111;"></div>
<div style="left:1913px;top:572px;width:1px;height:3px;background:#111;"></div>
<div style="left:1915px;top:572px;width:1px;height:3px;background:#111;"></div>
<div style="left:1913px;top:578px;width:1px;height:3px;background:#111;"></div>
<div style="left:1915px;top:578px;width:1px;height:3px;background:#111;"></div>
<div style="left:1913px;top:584px;width:1px;height:3px;background:#111;"></div>
<div style="left:1915px;top:584px;width:1px;height:3px;background:#111;"></div>
<div style="left:1913px;top:590px;width:1px;height:3px;background:#111;"></div>
<div style="left:1915px;top:590px;width:1px;height:3px;background:#111;"></div>
<div style="left:1913px;top:596px;width:1px;height:3px;background:#111;"></div>
<div style="left:1915px;top:596px;width:1px;height:3px;background:#111;"></div>
<div style="left:1913px;top:602px;width:1px;height:3px;background:#111;"></div>
<div style="left:1915px;top:602px;width:1px;height:3px;background:#111;"></div>
<div style="left:1913px;top:608px;width:1px;height:3px;background:#111;"></div>
<div style="left:1915px;top:608px;width:1px;height:3px;background:#111;"></div>
<div style="left:1913px;top:614px;width:1px;height:3px;background:#111;"></div>
<div style="left:1915px;top:614px;width:1px;height:3px;background:#111;"></div>
<svg style="left:1912px;top:619px;" width="4" height="6" viewBox="0 0 4 6"><path d="M3.500 0v5.200L0 2.600z" fill="#111"/></svg>
<div style="left:247px;top:1011px;width:1673px;height:7px;background:#b0cfee;"></div>
<div style="left:0px;top:1018px;width:1920px;height:21px;background:#f0f0f0;"></div>
<div style="left:0px;top:1039px;width:1920px;height:1px;background:#9aa5aa;"></div>
<div style="left:0px;top:1040px;width:1920px;height:1px;background:#17323f;"></div>
<div style="left:706px;top:1020px;width:1px;height:18px;background:#dcdcdc;"></div>
<div style="left:728px;top:1020px;width:1px;height:18px;background:#dcdcdc;"></div>
<div style="left:750px;top:1020px;width:1px;height:18px;background:#dcdcdc;"></div>
<div style="left:902px;top:1020px;width:1px;height:18px;background:#dcdcdc;"></div>
<div style="left:1118px;top:1020px;width:1px;height:18px;background:#dcdcdc;"></div>
<div style="left:1263px;top:1020px;width:1px;height:18px;background:#dcdcdc;"></div>
<div style="left:1478px;top:1020px;width:1px;height:18px;background:#dcdcdc;"></div>
<div style="left:1551px;top:1020px;width:1px;height:18px;background:#dcdcdc;"></div>
<div style="left:1622px;top:1020px;width:1px;height:18px;background:#dcdcdc;"></div>
<div style="left:1839px;top:1020px;width:1px;height:18px;background:#dcdcdc;"></div>
<div style="left:1861px;top:1020px;width:1px;height:18px;background:#dcdcdc;"></div>
<div style="left:1883px;top:1020px;width:1px;height:18px;background:#dcdcdc;"></div>
<svg style="left:913px;top:1021px;" width="15" height="15" viewBox="0 0 15 15"><circle cx="7.500" cy="7.500" r="6.500" fill="#fff" stroke="#3a8ed6" stroke-width="1.200"/><path d="M3.500 8.500v-1.500a4 4 0 0 1 8 0v1.500" stroke="#3a8ed6" stroke-width="1.200" fill="none"/><rect x="2.800" y="7.500" width="2.200" height="3.500" rx="1" fill="#3a8ed6"/><rect x="10" y="7.500" width="2.200" height="3.500" rx="1" fill="#3a8ed6"/></svg>
<div style="left:931px;top:1020.89px;line-height:14px;font-size:11px;white-space:pre;letter-spacing:-0.329px;color:#0000c8;text-decoration:underline;text-decoration-skip-ink:none;">Assistenza Remota</div>
<div style="left:1125px;top:1021.99px;line-height:14px;font-size:11px;white-space:pre;letter-spacing:0.086px;">GDI: 3550/16000</div>
<div style="left:1267px;top:1022.14px;line-height:16px;font-size:12px;white-space:pre;letter-spacing:-0.004px;">Utente: wincat</div>
<div style="left:1483px;top:1022.14px;line-height:16px;font-size:12px;white-space:pre;letter-spacing:-0.507px;">v3.9.130</div>
<div style="left:1555px;top:1022.14px;line-height:16px;font-size:12px;white-space:pre;letter-spacing:-0.229px;">02/01/2026</div>
<div style="left:1627px;top:1022.14px;line-height:16px;font-size:12px;white-space:pre;letter-spacing:0.093px;">e:\develop\catgest\exe39\</div>
<svg style="left:1842px;top:1023px;" width="16" height="14" viewBox="0 0 16 14"><rect x="0.500" y="0.500" width="15" height="13" fill="#fff" stroke="#222"/><rect x="1" y="1" width="14" height="3" fill="#1b2a8c"/></svg>
<svg style="left:1866px;top:1021px;" width="14" height="17" viewBox="0 0 14 17"><path d="M3.500 8V5.500a3.500 3.500 0 0 1 7 0V8" stroke="#c4c4c4" stroke-width="2.200" fill="none"/><rect x="0.500" y="7.500" width="13" height="9" rx="2.500" fill="#cfcfcf"/><circle cx="7" cy="11.500" r="1.800" fill="#b3b3b3"/><path d="M7 12v2.500" stroke="#b3b3b3" stroke-width="1.200"/></svg>
<svg style="left:1886px;top:1022px;" width="17" height="16" viewBox="0 0 17 16"><rect x="1.500" y="0.500" width="14" height="4" fill="#e9e9d8" stroke="#222"/><rect x="1.500" y="5.500" width="14" height="4" fill="#e9e9d8" stroke="#222"/><path d="M11 2.500h3M11 7.500h3" stroke="#2a9a2a" stroke-width="1.200"/><path d="M8.500 9.500v4M0 14h17" stroke="#222" stroke-width="1.400"/><rect x="6.500" y="12.500" width="4" height="3" fill="#d9c94a" stroke="#222" stroke-width=".8"/></svg>
<svg style="left:2px;top:3.5px;" width="16" height="16" viewBox="0 0 16 16"><circle cx="8" cy="8" r="7" fill="#3b78c4"/><path d="M1.500 7c1.500-4 7-6.500 12-3.500-1 3-3.500 4-5.500 3s-4.500-1-6.500 .5z" fill="#a9cdf0"/><circle cx="11.500" cy="4.500" r="2.200" fill="#ffe14a"/><path d="M2.500 8.500l2 5 3-4.500 3 4.500 2.500-6.500" stroke="#fff" stroke-width="2" fill="none" stroke-linejoin="round"/></svg>
<div style="left:4px;top:24px;width:17px;height:18px;background:#eef4fb;"></div>
<svg style="left:5px;top:25px;" width="15" height="15" viewBox="0 0 16 16"><circle cx="8" cy="8" r="7" fill="#3b78c4"/><path d="M1.500 7c1.500-4 7-6.500 12-3.500-1 3-3.500 4-5.500 3s-4.500-1-6.500 .5z" fill="#a9cdf0"/><circle cx="11.500" cy="4.500" r="2.200" fill="#ffe14a"/><path d="M2.500 8.500l2 5 3-4.500 3 4.500 2.500-6.500" stroke="#fff" stroke-width="2" fill="none" stroke-linejoin="round"/></svg>
<svg style="left:15px;top:51px;" width="22" height="20" viewBox="0 0 22 20"><rect x="1.500" y="5" width="19" height="14.500" fill="#f6cb7c" stroke="#dcae5c" stroke-width="1"/><rect x="0.500" y="0.500" width="21" height="4.500" fill="#f3c573" stroke="#d6a550" stroke-width="1"/><path d="M7 7.500h8" stroke="#a9782c" stroke-width="1.400"/><path d="M14 14v2.500M16.500 14v2.500M13.500 17.500h4" stroke="#b98b3f" stroke-width=".9"/></svg>
<svg style="left:92.5px;top:51px;" width="21" height="21" viewBox="0 0 21 21"><rect x="1" y="1" width="7" height="7" fill="#ead5ee" stroke="#b483ba" stroke-width="1.300"/><rect x="13" y="1" width="7" height="6.500" fill="#fff" stroke="#d3e3f7" stroke-width="1.200"/><rect x="1" y="13" width="7" height="7" fill="#ecc9e6" stroke="#b483ba" stroke-width="1.300"/><circle cx="4.500" cy="16.500" r="1.600" fill="#fff" stroke="#b06fae" stroke-width="1"/><rect x="12.500" y="12.500" width="8" height="8" rx="1" fill="#5b8ed6"/><path d="M14.500 18.500l4-4" stroke="#cfe0fa" stroke-width="1.500"/></svg>
<svg style="left:191px;top:50px;" width="24" height="22" viewBox="0 0 24 22"><path d="M8.500 2.500v-1.500h7v1.500" fill="none" stroke="#e9c98f" stroke-width="1.300"/><rect x="0.500" y="2.500" width="23" height="19" rx="1" fill="#f6cb7c" stroke="#dcae5c" stroke-width="1"/><path d="M0.500 11.500h23" stroke="#dcae5c" stroke-width="1"/><rect x="11" y="9" width="2" height="2" fill="#9c6b22"/></svg>
<svg style="left:289px;top:50px;" width="22" height="21" viewBox="0 0 22 21"><rect x="3" y="3" width="18.500" height="18" fill="#1e88e5"/><rect x="13" y="1" width="1.500" height="3" fill="#1e88e5"/><rect x="18" y="1" width="1.500" height="3" fill="#1e88e5"/><rect x="5.0" y="12" width="2.400" height="2.400" fill="#fff"/><rect x="5.0" y="16" width="2.400" height="2.400" fill="#fff"/><rect x="9.3" y="12" width="2.400" height="2.400" fill="#fff"/><rect x="9.3" y="16" width="2.400" height="2.400" fill="#fff"/><rect x="13.6" y="12" width="2.400" height="2.400" fill="#fff"/><rect x="13.6" y="16" width="2.400" height="2.400" fill="#fff"/><rect x="13.6" y="8" width="2.400" height="2.400" fill="#fff"/><rect x="17.9" y="12" width="2.400" height="2.400" fill="#fff"/><rect x="17.9" y="16" width="2.400" height="2.400" fill="#fff"/><rect x="17.9" y="8" width="2.400" height="2.400" fill="#fff"/><circle cx="5.800" cy="5.800" r="5.300" fill="#fafafa" stroke="#8d9196" stroke-width="1.100"/><path d="M5.800 2.500v3.500l2.500 1" stroke="#444" stroke-width=".9" fill="none"/></svg>
</body></html>
